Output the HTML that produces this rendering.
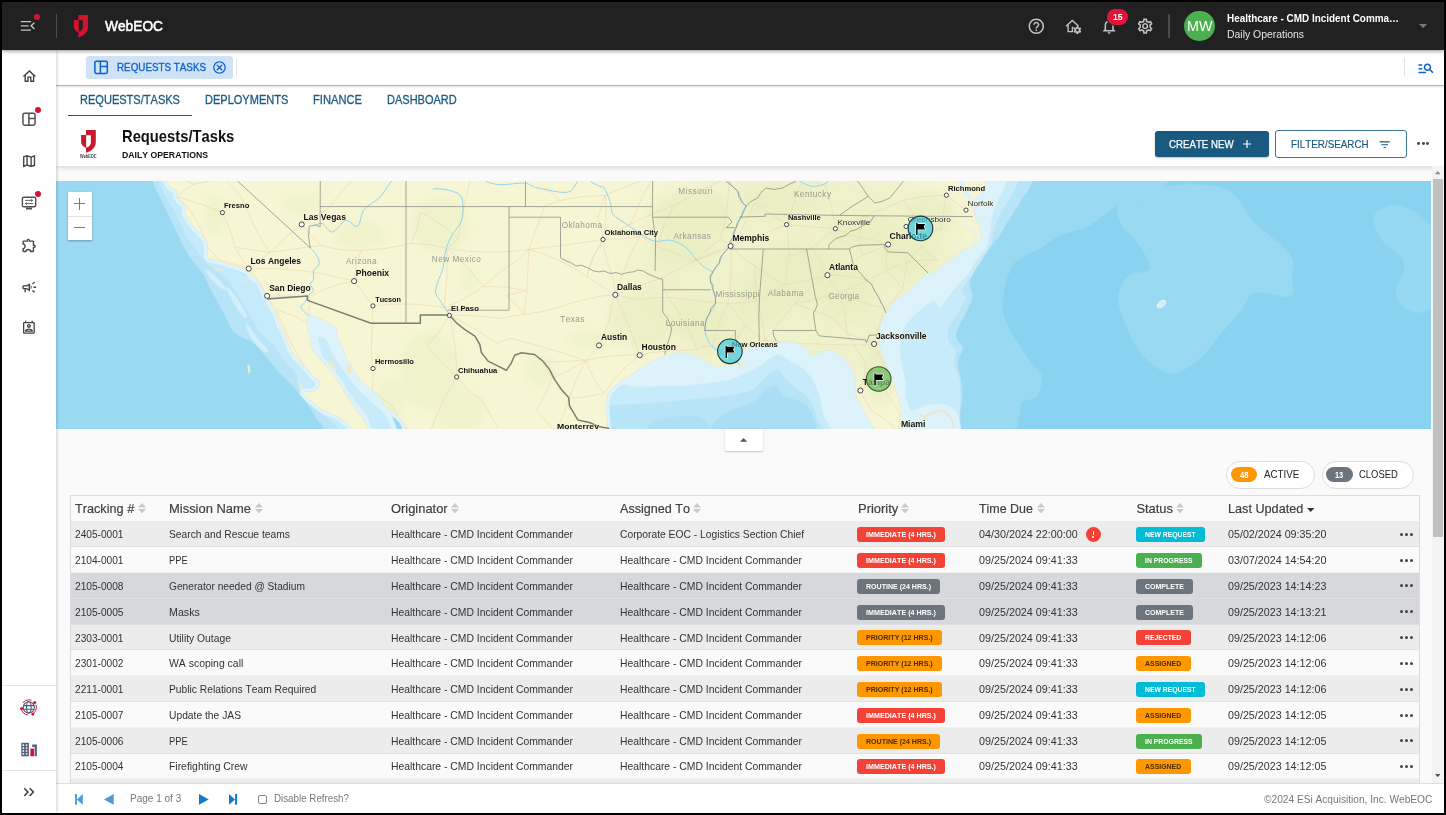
<!DOCTYPE html>
<html lang="en"><head><meta charset="utf-8"><title>WebEOC - Requests/Tasks</title>
<style>
*{box-sizing:border-box}
html,body{margin:0;padding:0;background:#000;}
body{width:1446px;height:815px;overflow:hidden;position:relative;font-family:"Liberation Sans", sans-serif;font-kerning:none;-webkit-font-smoothing:antialiased}
#app{position:absolute;left:0;top:0;width:1446px;height:815px;background:#000;overflow:hidden;will-change:transform}
#app div,#app span.t,#app svg.i,#app header,#app aside,#app nav,#app main,#app footer,#app section{position:absolute}
span.t{white-space:nowrap;display:block;transform-origin:0 0}
.dot{border-radius:50%;background:#d8102f}
.bdg{border-radius:3px;height:15.2px}
</style></head>
<body><div id="app">
<div style="left:56.00px;top:49.50px;width:1388.00px;height:763.50px;background:#fafafa"></div>
<div style="left:56px;top:180.6px;width:1375.2px;height:248.4px;background:#8ad3f0;overflow:hidden"><svg class="i" style="left:0;top:0" width="1375.2" height="248.4" viewBox="56 180.6 1375.2 248.4"><defs><filter id="bl" x="-20%" y="-20%" width="140%" height="140%"><feGaussianBlur stdDeviation="5"/></filter><filter id="bl2" x="-30%" y="-30%" width="160%" height="160%"><feGaussianBlur stdDeviation="22"/></filter><filter id="b1" x="-5%" y="-5%" width="110%" height="110%"><feGaussianBlur stdDeviation=".7"/></filter><clipPath id="lc"><path d="M986.0 140.0C1109.0 143.0 986.0 154.6 986.0 160.0C986.0 165.4 986.0 172.8 986.0 176.0C986.0 179.2 986.5 178.8 986.0 181.0C985.5 183.2 984.1 188.8 982.7 191.0C981.4 193.2 978.5 194.3 977.0 196.0C975.5 197.7 973.2 199.9 972.8 202.6C972.4 205.3 973.4 210.7 974.4 214.2C975.4 217.7 978.4 222.6 979.4 225.8C980.4 229.0 981.3 233.3 981.1 235.8C980.9 238.3 979.5 240.7 977.8 242.4C976.1 244.1 972.0 246.2 969.5 247.4C967.0 248.6 963.5 249.5 961.2 250.7C959.0 251.9 956.8 254.0 954.5 255.7C952.2 257.4 948.4 260.6 946.2 262.3C944.0 264.0 941.6 265.9 939.6 267.3C937.6 268.7 935.0 270.5 933.0 271.5C931.0 272.5 928.3 272.9 926.3 274.0C924.3 275.1 921.7 277.2 919.7 278.9C917.7 280.6 915.0 283.6 913.0 285.6C911.0 287.6 908.6 290.5 906.4 292.2C904.2 293.9 900.3 295.5 898.1 297.2C895.9 298.9 893.2 301.6 891.5 303.8C889.8 306.0 888.1 309.1 886.5 312.1C884.9 315.1 881.6 320.7 880.5 324.0C879.4 327.3 879.1 331.0 879.0 334.0C878.9 337.0 879.1 341.1 879.5 344.0C879.9 346.9 880.7 350.1 881.5 353.0C882.3 355.9 883.6 359.9 885.0 363.0C886.4 366.1 889.6 370.6 891.0 374.0C892.4 377.4 893.4 382.0 894.5 385.6C895.6 389.2 897.5 394.3 898.5 398.0C899.5 401.7 900.8 406.9 901.4 410.5C902.0 414.1 902.4 419.2 902.2 422.0C902.0 424.8 900.5 427.2 900.0 429.0C899.5 430.8 899.1 430.9 899.0 434.0C898.9 437.1 899.0 444.6 899.0 450.0C899.0 455.4 902.5 467.0 899.0 470.0C895.5 473.0 879.5 473.0 876.0 470.0C872.5 467.0 876.0 455.4 876.0 450.0C876.0 444.6 876.1 437.1 876.0 434.0C875.9 430.9 875.7 430.5 875.0 429.0C874.3 427.5 872.8 425.8 871.5 423.8C870.2 421.8 868.1 418.2 866.6 415.5C865.1 412.8 863.0 408.0 861.6 405.5C860.2 403.0 858.5 401.1 857.5 398.9C856.5 396.7 855.5 393.1 855.2 390.6C854.9 388.1 856.0 385.0 855.8 382.3C855.6 379.6 855.1 375.0 854.1 372.3C853.1 369.6 850.7 366.2 849.0 364.0C847.3 361.8 844.8 359.4 842.6 357.4C840.4 355.4 836.8 351.9 834.3 350.8C831.8 349.7 828.2 349.7 826.0 349.9C823.8 350.1 821.5 351.6 819.3 352.4C817.0 353.1 812.7 355.4 811.0 354.9C809.3 354.4 809.2 350.7 807.7 349.1C806.2 347.5 803.3 345.2 801.1 344.1C798.9 343.0 795.5 342.0 792.8 341.6C790.1 341.2 785.8 341.5 782.8 341.6C779.8 341.7 776.4 342.1 772.9 342.5C769.4 342.9 763.1 343.6 759.6 344.1C756.1 344.6 752.1 344.6 749.6 345.8C747.1 347.0 744.5 350.4 743.0 352.4C741.5 354.4 739.7 357.6 739.7 359.1C739.7 360.6 742.0 361.2 743.0 362.4C744.0 363.6 746.8 367.2 746.3 367.4C745.8 367.6 742.2 364.4 739.7 364.0C737.2 363.6 733.2 364.6 729.7 364.9C726.2 365.2 719.6 366.1 716.4 365.7C713.2 365.3 710.6 363.5 708.1 362.4C705.6 361.3 702.0 359.4 699.8 358.2C697.6 357.0 696.2 355.1 693.2 354.1C690.2 353.1 684.4 351.3 680.0 351.6C675.6 351.9 668.0 354.6 664.1 355.8C660.2 357.0 657.1 358.4 654.1 359.9C651.1 361.4 647.1 363.8 644.1 365.7C641.1 367.6 637.2 370.4 634.2 372.3C631.2 374.2 627.2 376.2 624.2 378.2C621.2 380.2 616.8 383.2 614.3 385.6C611.8 388.0 608.8 391.4 607.6 393.9C606.4 396.4 606.2 399.5 606.0 402.2C605.8 404.9 605.8 409.2 606.0 412.2C606.2 415.2 607.0 419.5 607.2 422.0C607.4 424.5 607.5 427.2 607.6 429.0C607.7 430.8 607.9 430.9 608.0 434.0C608.1 437.1 608.0 444.6 608.0 450.0C608.0 455.4 638.2 467.0 608.0 470.0C577.8 473.0 436.7 473.0 406.5 470.0C376.3 467.0 406.5 455.4 406.5 450.0C406.5 444.6 406.6 437.1 406.5 434.0C406.4 430.9 406.2 430.5 405.9 429.0C405.6 427.5 405.3 425.6 404.3 423.8C403.3 422.0 401.3 419.2 399.3 417.2C397.3 415.2 393.5 412.8 391.0 410.5C388.5 408.2 384.7 404.7 382.7 402.2C380.7 399.7 379.4 395.9 377.7 393.9C376.0 391.9 373.3 390.6 371.1 388.9C368.9 387.2 365.1 384.5 362.8 382.3C360.6 380.1 357.8 376.5 356.1 374.0C354.4 371.5 352.7 368.2 351.2 365.7C349.7 363.2 347.4 360.1 346.2 357.4C345.0 354.7 344.1 350.5 342.9 347.5C341.7 344.5 338.9 340.5 337.9 337.5C336.9 334.5 337.4 329.5 336.2 327.5C335.0 325.5 331.6 325.4 329.6 324.2C327.6 323.0 325.6 320.6 322.9 319.2C320.2 317.8 313.5 315.6 311.3 315.1C309.1 314.6 308.7 314.3 308.0 315.9C307.3 317.5 306.4 322.9 306.7 325.9C307.0 328.9 309.0 332.6 309.7 335.8C310.4 339.0 310.1 344.5 311.3 347.5C312.5 350.5 315.8 353.1 318.0 355.8C320.2 358.5 324.1 363.0 326.3 365.7C328.5 368.4 330.9 371.5 332.9 374.0C334.9 376.5 337.9 379.8 339.5 382.3C341.1 384.8 342.2 388.1 343.7 390.6C345.2 393.1 347.9 396.4 349.5 398.9C351.1 401.4 352.8 404.7 354.5 407.2C356.2 409.7 359.4 413.0 361.1 415.5C362.8 418.0 365.0 421.8 366.1 423.8C367.2 425.8 368.2 427.5 368.6 429.0C369.0 430.5 368.9 430.9 369.0 434.0C369.1 437.1 369.0 444.6 369.0 450.0C369.0 455.4 371.3 467.0 369.0 470.0C366.7 473.0 355.8 473.0 353.5 470.0C351.2 467.0 353.5 455.4 353.5 450.0C353.5 444.6 353.6 437.1 353.5 434.0C353.4 430.9 353.9 430.8 352.8 429.0C351.7 427.2 348.7 424.1 346.2 422.1C343.7 420.1 339.4 417.2 336.2 415.5C333.0 413.8 328.1 412.5 324.6 410.5C321.1 408.5 316.2 404.9 313.0 402.2C309.8 399.5 302.8 394.0 303.0 392.3C303.2 390.6 312.1 392.1 314.6 390.6C317.1 389.1 319.8 384.5 319.6 382.3C319.4 380.1 315.2 378.2 313.0 375.7C310.8 373.2 307.2 368.4 304.7 365.7C302.2 363.0 298.5 359.9 296.4 357.4C294.3 354.9 292.1 352.1 290.6 349.1C289.1 346.1 288.0 341.2 286.4 337.5C284.8 333.8 281.4 327.9 279.8 324.2C278.2 320.5 277.1 315.8 275.6 312.6C274.1 309.4 271.0 305.0 269.8 302.6C268.6 300.2 267.9 297.9 267.3 296.8C266.7 295.7 266.8 297.0 266.0 295.5C265.2 294.0 263.2 289.2 262.0 287.0C260.8 284.8 259.6 282.2 258.0 280.5C256.4 278.8 252.5 276.9 251.0 275.5C249.5 274.1 249.6 272.7 248.0 271.5C246.4 270.3 243.2 268.6 240.5 267.5C237.8 266.4 233.6 265.1 230.0 264.0C226.4 262.9 219.8 261.0 216.5 260.0C213.2 259.0 209.3 258.9 208.0 257.5C206.7 256.1 207.7 253.0 207.5 250.5C207.3 248.0 207.6 243.7 206.5 241.0C205.4 238.3 202.2 235.1 200.0 232.5C197.8 229.9 194.2 226.8 192.0 224.0C189.8 221.2 186.5 216.7 185.5 214.0C184.5 211.3 186.7 208.5 185.5 206.0C184.3 203.5 178.8 199.8 177.5 197.5C176.2 195.2 177.8 192.9 176.5 191.0C175.2 189.1 169.9 186.0 168.5 184.5C167.1 183.0 167.4 182.3 167.0 181.0C166.6 179.7 166.2 179.2 166.0 176.0C165.8 172.8 166.0 165.4 166.0 160.0C166.0 154.6 43.0 143.0 166.0 140.0C289.0 137.0 863.0 137.0 986.0 140.0Z"/></clipPath></defs><rect x="56" y="180.6" width="1375.2" height="248.4" fill="#8ad3f0"/><g filter="url(#b1)"><path d="M50.0 170.0L420.0 170.0L420.0 440.0L50.0 440.0Z" fill="#9ad9f2"/><path d="M153.0 150.0C150.7 154.1 152.1 174.7 153.0 181.0C153.9 187.3 158.0 192.6 160.0 197.0C162.0 201.4 165.6 208.9 168.0 214.0C170.4 219.1 175.7 230.2 178.0 235.0C180.3 239.8 183.3 246.2 185.5 250.0C187.7 253.8 192.0 260.0 194.4 263.3C196.8 266.6 200.9 270.5 203.3 274.4C205.7 278.3 209.5 287.2 212.2 292.2C214.9 297.2 220.3 306.9 223.3 312.2C226.3 317.5 230.3 328.1 234.4 332.2C238.5 336.3 249.9 339.8 254.3 343.3C258.7 346.8 264.1 354.7 267.7 358.8C271.3 362.9 277.5 370.4 281.0 374.3C284.5 378.2 291.0 384.1 294.3 387.7C297.6 391.3 302.4 396.9 305.4 401.0C308.4 405.1 314.1 415.0 316.5 418.7C318.9 422.4 322.2 422.9 323.2 428.7C324.2 434.5 319.1 457.6 324.0 462.0C328.9 466.4 357.9 470.3 360.0 462.0C362.1 453.7 348.0 416.3 340.0 400.0C332.0 383.7 309.3 354.7 300.0 340.0C290.7 325.3 281.3 301.3 270.0 290.0C258.7 278.7 225.7 267.0 215.0 255.0C204.3 243.0 196.0 214.0 190.0 200.0C184.0 186.0 174.9 156.7 170.0 150.0C165.1 143.3 155.3 145.9 153.0 150.0Z" fill="#b7e4f7"/><path d="M159.0 150.0C157.3 154.1 158.1 174.7 159.0 181.0C159.9 187.3 163.7 192.6 166.0 197.0C168.3 201.4 173.3 208.9 176.0 214.0C178.7 219.1 183.3 230.2 186.0 235.0C188.7 239.8 193.2 246.3 196.0 250.0C198.8 253.7 203.5 259.7 207.0 263.0C210.5 266.3 218.1 271.1 222.0 275.0C225.9 278.9 232.5 287.1 236.0 292.0C239.5 296.9 244.8 306.7 248.0 312.0C251.2 317.3 256.8 327.9 260.0 332.0C263.2 336.1 268.9 339.4 272.0 343.0C275.1 346.6 279.8 354.9 283.0 359.0C286.2 363.1 293.9 370.1 296.0 374.0C298.1 377.9 297.4 384.4 299.0 388.0C300.6 391.6 304.1 396.9 308.0 401.0C311.9 405.1 324.0 415.3 328.0 419.0C332.0 422.7 336.5 423.3 338.0 429.0C339.5 434.7 335.8 457.6 339.0 462.0C342.2 466.4 361.9 470.3 362.0 462.0C362.1 453.7 348.3 416.3 340.0 400.0C331.7 383.7 309.3 354.7 300.0 340.0C290.7 325.3 281.3 301.3 270.0 290.0C258.7 278.7 225.7 267.0 215.0 255.0C204.3 243.0 195.7 214.0 190.0 200.0C184.3 186.0 176.1 156.7 172.0 150.0C167.9 143.3 160.7 145.9 159.0 150.0Z" fill="#c8ebf9" opacity=".8"/><path d="M226.0 286.0C226.7 285.3 232.5 291.2 236.0 296.0C239.5 300.8 245.8 311.7 247.0 315.0C248.2 318.3 245.5 318.5 243.0 316.0C240.5 313.5 234.8 305.0 232.0 300.0C229.2 295.0 225.3 286.7 226.0 286.0Z" fill="#ddf3fc" opacity=".7"/><path d="M246.0 322.0C247.3 322.3 254.3 333.3 258.0 338.0C261.7 342.7 267.2 347.8 268.0 350.0C268.8 352.2 266.0 353.3 263.0 351.0C260.0 348.7 252.8 340.8 250.0 336.0C247.2 331.2 244.7 321.7 246.0 322.0Z" fill="#ddf3fc" opacity=".7"/><path d="M205.0 268.0C206.0 267.7 212.5 272.7 216.0 276.0C219.5 279.3 225.2 286.0 226.0 288.0C226.8 290.0 223.7 289.7 221.0 288.0C218.3 286.3 212.7 281.3 210.0 278.0C207.3 274.7 204.0 268.3 205.0 268.0Z" fill="#ddf3fc" opacity=".7"/><path d="M308.0 314.0L340.0 320.0L350.0 360.0L385.0 398.0L410.0 462.0L366.0 462.0L340.0 385.0L312.0 350.0L305.0 326.0Z" fill="#ddf3fc"/><path d="M318.0 338.0C318.3 335.0 323.3 337.0 326.0 340.0C328.7 343.0 330.8 350.7 334.0 356.0C337.2 361.3 341.2 366.7 345.0 372.0C348.8 377.3 352.5 383.0 357.0 388.0C361.5 393.0 366.8 396.7 372.0 402.0C377.2 407.3 384.0 410.0 388.0 420.0C392.0 430.0 397.7 455.0 396.0 462.0C394.3 469.0 382.7 469.3 378.0 462.0C373.3 454.7 372.3 428.7 368.0 418.0C363.7 407.3 357.0 404.7 352.0 398.0C347.0 391.3 342.7 384.7 338.0 378.0C333.3 371.3 327.3 364.7 324.0 358.0C320.7 351.3 317.7 341.0 318.0 338.0Z" fill="#c8ebf9"/><path d="M600.0 340.0L900.0 340.0L900.0 462.0L600.0 462.0Z" fill="#ddf3fc"/><path d="M600.0 388.0C605.3 378.0 632.0 387.3 640.0 387.0C648.0 386.7 654.0 385.8 660.0 385.6C666.0 385.4 678.3 386.0 684.9 385.6C691.5 385.2 703.6 383.2 709.8 382.3C716.0 381.4 726.5 380.3 731.4 379.0C736.3 377.7 742.5 374.1 746.3 372.3C750.1 370.5 756.4 367.6 759.6 365.7C762.8 363.8 767.3 359.5 770.0 358.0C772.7 356.5 776.5 353.5 779.5 354.1C782.5 354.7 789.5 360.4 792.8 362.4C796.1 364.4 801.5 366.3 804.4 369.0C807.3 371.7 812.4 378.8 814.4 382.3C816.4 385.8 818.2 391.6 819.3 395.6C820.4 399.6 821.8 403.3 822.7 412.2C823.6 421.1 855.7 455.4 826.0 462.0C796.3 468.6 630.1 471.9 600.0 462.0C569.9 452.1 594.7 398.0 600.0 388.0Z" fill="#c8ebf9"/><path d="M606.0 410.0C609.2 402.3 622.8 405.0 630.0 404.0C637.2 403.0 651.6 402.9 660.0 402.2C668.4 401.5 684.3 399.8 693.2 398.9C702.1 398.0 718.4 396.9 726.4 395.6C734.4 394.3 747.6 391.7 752.9 389.0C758.2 386.3 762.9 378.4 766.2 375.7C769.5 373.0 775.1 368.6 777.8 369.0C780.5 369.4 783.4 376.3 786.1 379.0C788.8 381.7 794.7 386.3 797.8 389.0C800.9 391.7 807.0 395.4 809.4 398.9C811.8 402.4 814.7 407.1 816.0 415.5C817.3 423.9 847.3 455.8 819.3 462.0C791.3 468.2 634.4 468.9 606.0 462.0C577.6 455.1 602.8 417.7 606.0 410.0Z" fill="#b7e4f7"/><path d="M700.0 462.0C685.8 457.6 706.3 435.4 709.8 428.8C713.3 422.2 720.7 415.7 726.4 412.2C732.1 408.7 747.6 405.3 752.9 402.2C758.2 399.1 763.1 391.2 766.2 389.0C769.3 386.8 774.0 384.7 776.2 385.6C778.4 386.5 779.3 393.4 782.8 395.6C786.3 397.8 798.7 399.5 802.7 402.2C806.7 404.9 810.9 407.5 812.7 415.5C814.5 423.5 831.0 455.8 816.0 462.0C801.0 468.2 714.2 466.4 700.0 462.0Z" fill="#a9def4"/><path d="M640.0 462.0C631.2 456.9 644.7 430.1 650.0 424.0C655.3 417.9 672.7 416.5 680.0 416.0C687.3 415.5 700.2 413.9 705.0 420.0C709.8 426.1 724.7 456.4 716.0 462.0C707.3 467.6 648.8 467.1 640.0 462.0Z" fill="#a9def4" opacity=".7"/><path d="M960.0 150.0C995.2 130.0 1136.8 145.0 1164.0 150.0C1191.2 155.0 1166.8 180.6 1164.0 187.5C1161.2 194.4 1149.1 199.2 1143.0 201.5C1136.9 203.8 1125.1 201.9 1118.0 205.0C1110.9 208.1 1097.7 221.0 1090.0 225.0C1082.3 229.0 1066.7 231.9 1060.0 235.0C1053.3 238.1 1046.0 244.4 1040.0 248.0C1034.0 251.6 1019.7 257.1 1015.0 262.0C1010.3 266.9 1006.6 278.6 1005.0 285.0C1003.4 291.4 1002.3 304.0 1003.0 310.0C1003.7 316.0 1007.9 325.5 1010.0 330.0C1012.1 334.5 1016.2 339.7 1019.0 344.0C1021.8 348.3 1027.9 357.7 1031.0 362.0C1034.1 366.3 1041.2 371.5 1042.0 376.0C1042.8 380.5 1039.7 392.5 1037.0 396.0C1034.3 399.5 1024.4 399.3 1022.0 402.0C1019.6 404.7 1021.5 408.0 1019.0 416.0C1016.5 424.0 1018.9 455.9 1003.0 462.0C987.1 468.1 913.7 483.6 900.0 462.0C886.3 440.4 892.0 341.6 900.0 300.0C908.0 258.4 924.8 170.0 960.0 150.0Z" fill="#9ad9f2"/><path d="M1118.4 205.0C1121.9 200.9 1135.4 204.4 1143.0 201.5C1150.6 198.6 1155.3 190.4 1164.0 187.5C1172.7 184.6 1183.9 183.4 1195.0 184.0C1206.1 184.6 1220.4 184.6 1230.4 191.0C1240.4 197.4 1245.1 212.0 1255.0 222.5C1264.9 233.0 1283.8 244.8 1290.0 254.0C1296.2 263.2 1292.0 271.0 1292.0 278.0C1292.0 285.0 1296.2 293.6 1290.0 296.0C1283.8 298.4 1263.2 290.2 1255.0 292.5C1246.8 294.8 1246.8 303.0 1241.0 310.0C1235.2 317.0 1227.0 326.3 1220.0 334.5C1213.0 342.7 1207.2 352.6 1199.0 359.0C1190.8 365.4 1180.3 373.6 1171.0 373.0C1161.7 372.4 1150.6 363.7 1143.0 355.5C1135.4 347.3 1129.6 333.9 1125.5 324.0C1121.4 314.1 1117.8 304.2 1118.4 296.0C1119.0 287.8 1123.7 279.7 1129.0 275.0C1134.3 270.3 1148.8 273.8 1150.0 268.0C1151.2 262.2 1140.7 247.0 1136.0 240.0C1131.3 233.0 1124.9 231.8 1122.0 226.0C1119.1 220.2 1114.9 209.1 1118.4 205.0Z" fill="#9ad9f2"/><path d="M1374.0 215.0C1376.2 209.2 1387.3 205.0 1395.0 205.0C1402.7 205.0 1413.2 209.2 1420.0 215.0C1426.8 220.8 1433.3 225.8 1436.0 240.0C1438.7 254.2 1439.5 288.0 1436.0 300.0C1432.5 312.0 1421.7 312.7 1415.0 312.0C1408.3 311.3 1397.8 304.3 1396.0 296.0C1394.2 287.7 1406.3 271.3 1404.0 262.0C1401.7 252.7 1387.0 247.8 1382.0 240.0C1377.0 232.2 1371.8 220.8 1374.0 215.0Z" fill="#9ad9f2" opacity=".8"/><path d="M950.0 150.0C970.3 130.0 1021.5 145.9 1032.5 150.0C1043.5 154.1 1033.8 174.7 1032.5 181.0C1031.2 187.3 1025.1 193.5 1022.6 197.6C1020.1 201.7 1016.2 208.5 1014.0 212.0C1011.8 215.5 1008.0 221.0 1006.0 224.2C1004.0 227.4 1002.0 232.0 999.3 235.8C996.6 239.6 989.2 248.2 986.1 252.4C983.0 256.6 978.3 263.1 976.1 267.3C973.9 271.5 969.9 280.1 969.5 283.9C969.1 287.7 973.3 292.2 972.8 296.0C972.3 299.8 968.1 308.3 966.1 312.6C964.1 316.9 959.3 324.7 958.0 328.0C956.7 331.3 955.6 334.9 956.2 337.5C956.8 340.1 962.6 344.2 962.8 347.5C963.0 350.8 958.2 357.8 958.0 362.0C957.8 366.2 960.5 374.1 961.0 379.0C961.5 383.9 962.1 394.5 962.0 398.9C961.9 403.3 961.6 403.8 960.5 412.2C959.4 420.6 964.7 455.4 954.0 462.0C943.3 468.6 889.9 483.6 880.0 462.0C870.1 440.4 870.7 341.6 880.0 300.0C889.3 258.4 929.7 170.0 950.0 150.0Z" fill="#b7e4f7"/><path d="M950.0 150.0C968.5 130.0 1009.9 145.9 1019.0 150.0C1028.1 154.1 1019.2 174.7 1018.0 181.0C1016.8 187.3 1012.4 193.2 1010.0 197.6C1007.6 202.0 1002.1 209.7 1000.0 214.0C997.9 218.3 995.2 226.0 994.0 230.0C992.8 234.0 992.6 240.1 991.0 244.0C989.4 247.9 984.5 254.9 982.0 259.0C979.5 263.1 974.7 270.9 972.0 275.0C969.3 279.1 962.8 286.9 962.0 290.0C961.2 293.1 966.5 295.0 966.0 298.0C965.5 301.0 960.4 308.4 958.0 312.6C955.6 316.8 949.0 325.2 947.9 329.2C946.8 333.2 948.4 339.6 949.5 342.5C950.6 345.4 955.5 348.1 956.2 350.8C956.9 353.5 954.1 358.6 954.5 362.4C954.9 366.2 958.7 374.1 959.5 379.0C960.3 383.9 960.3 394.5 960.3 398.9C960.3 403.3 960.5 403.8 959.5 412.2C958.5 420.6 963.5 455.4 952.9 462.0C942.3 468.6 889.7 483.6 880.0 462.0C870.3 440.4 870.7 341.6 880.0 300.0C889.3 258.4 931.5 170.0 950.0 150.0Z" fill="#c8ebf9"/><path d="M950.0 150.0C965.9 132.5 999.5 146.4 1006.0 150.0C1012.5 153.6 1006.8 175.4 1006.0 181.0C1005.2 186.6 1000.9 193.7 999.3 197.6C997.7 201.5 993.9 209.7 992.7 214.2C991.5 218.7 990.2 231.9 989.4 235.8C988.6 239.7 987.4 244.7 986.0 247.4C984.6 250.1 979.1 255.9 977.0 259.0C974.9 262.1 970.8 270.3 968.0 274.0C965.2 277.7 956.3 286.7 953.0 290.6C949.7 294.5 942.2 306.0 940.0 307.1C937.8 308.2 936.5 299.5 934.0 300.0C931.5 300.5 922.4 308.0 919.0 311.0C915.6 314.0 906.9 321.8 904.7 325.9C902.5 330.0 900.1 341.2 899.8 345.8C899.5 350.4 901.5 361.4 902.2 365.7C902.9 370.0 905.1 378.4 905.6 382.3C906.1 386.2 905.7 395.7 906.4 398.9C907.1 402.1 909.8 409.3 912.0 410.0C914.2 410.7 921.1 405.7 925.0 405.0C928.9 404.3 941.1 402.8 945.0 404.0C948.9 405.2 956.2 408.2 958.0 415.0C959.8 421.8 969.1 456.5 960.0 462.0C950.9 467.5 890.5 480.9 880.0 462.0C869.5 443.1 861.8 336.4 870.0 300.0C878.2 263.6 934.1 167.5 950.0 150.0Z" fill="#ddf3fc"/></g><path d="M986.0 140.0C1109.0 143.0 986.0 154.6 986.0 160.0C986.0 165.4 986.0 172.8 986.0 176.0C986.0 179.2 986.5 178.8 986.0 181.0C985.5 183.2 984.1 188.8 982.7 191.0C981.4 193.2 978.5 194.3 977.0 196.0C975.5 197.7 973.2 199.9 972.8 202.6C972.4 205.3 973.4 210.7 974.4 214.2C975.4 217.7 978.4 222.6 979.4 225.8C980.4 229.0 981.3 233.3 981.1 235.8C980.9 238.3 979.5 240.7 977.8 242.4C976.1 244.1 972.0 246.2 969.5 247.4C967.0 248.6 963.5 249.5 961.2 250.7C959.0 251.9 956.8 254.0 954.5 255.7C952.2 257.4 948.4 260.6 946.2 262.3C944.0 264.0 941.6 265.9 939.6 267.3C937.6 268.7 935.0 270.5 933.0 271.5C931.0 272.5 928.3 272.9 926.3 274.0C924.3 275.1 921.7 277.2 919.7 278.9C917.7 280.6 915.0 283.6 913.0 285.6C911.0 287.6 908.6 290.5 906.4 292.2C904.2 293.9 900.3 295.5 898.1 297.2C895.9 298.9 893.2 301.6 891.5 303.8C889.8 306.0 888.1 309.1 886.5 312.1C884.9 315.1 881.6 320.7 880.5 324.0C879.4 327.3 879.1 331.0 879.0 334.0C878.9 337.0 879.1 341.1 879.5 344.0C879.9 346.9 880.7 350.1 881.5 353.0C882.3 355.9 883.6 359.9 885.0 363.0C886.4 366.1 889.6 370.6 891.0 374.0C892.4 377.4 893.4 382.0 894.5 385.6C895.6 389.2 897.5 394.3 898.5 398.0C899.5 401.7 900.8 406.9 901.4 410.5C902.0 414.1 902.4 419.2 902.2 422.0C902.0 424.8 900.5 427.2 900.0 429.0C899.5 430.8 899.1 430.9 899.0 434.0C898.9 437.1 899.0 444.6 899.0 450.0C899.0 455.4 902.5 467.0 899.0 470.0C895.5 473.0 879.5 473.0 876.0 470.0C872.5 467.0 876.0 455.4 876.0 450.0C876.0 444.6 876.1 437.1 876.0 434.0C875.9 430.9 875.7 430.5 875.0 429.0C874.3 427.5 872.8 425.8 871.5 423.8C870.2 421.8 868.1 418.2 866.6 415.5C865.1 412.8 863.0 408.0 861.6 405.5C860.2 403.0 858.5 401.1 857.5 398.9C856.5 396.7 855.5 393.1 855.2 390.6C854.9 388.1 856.0 385.0 855.8 382.3C855.6 379.6 855.1 375.0 854.1 372.3C853.1 369.6 850.7 366.2 849.0 364.0C847.3 361.8 844.8 359.4 842.6 357.4C840.4 355.4 836.8 351.9 834.3 350.8C831.8 349.7 828.2 349.7 826.0 349.9C823.8 350.1 821.5 351.6 819.3 352.4C817.0 353.1 812.7 355.4 811.0 354.9C809.3 354.4 809.2 350.7 807.7 349.1C806.2 347.5 803.3 345.2 801.1 344.1C798.9 343.0 795.5 342.0 792.8 341.6C790.1 341.2 785.8 341.5 782.8 341.6C779.8 341.7 776.4 342.1 772.9 342.5C769.4 342.9 763.1 343.6 759.6 344.1C756.1 344.6 752.1 344.6 749.6 345.8C747.1 347.0 744.5 350.4 743.0 352.4C741.5 354.4 739.7 357.6 739.7 359.1C739.7 360.6 742.0 361.2 743.0 362.4C744.0 363.6 746.8 367.2 746.3 367.4C745.8 367.6 742.2 364.4 739.7 364.0C737.2 363.6 733.2 364.6 729.7 364.9C726.2 365.2 719.6 366.1 716.4 365.7C713.2 365.3 710.6 363.5 708.1 362.4C705.6 361.3 702.0 359.4 699.8 358.2C697.6 357.0 696.2 355.1 693.2 354.1C690.2 353.1 684.4 351.3 680.0 351.6C675.6 351.9 668.0 354.6 664.1 355.8C660.2 357.0 657.1 358.4 654.1 359.9C651.1 361.4 647.1 363.8 644.1 365.7C641.1 367.6 637.2 370.4 634.2 372.3C631.2 374.2 627.2 376.2 624.2 378.2C621.2 380.2 616.8 383.2 614.3 385.6C611.8 388.0 608.8 391.4 607.6 393.9C606.4 396.4 606.2 399.5 606.0 402.2C605.8 404.9 605.8 409.2 606.0 412.2C606.2 415.2 607.0 419.5 607.2 422.0C607.4 424.5 607.5 427.2 607.6 429.0C607.7 430.8 607.9 430.9 608.0 434.0C608.1 437.1 608.0 444.6 608.0 450.0C608.0 455.4 638.2 467.0 608.0 470.0C577.8 473.0 436.7 473.0 406.5 470.0C376.3 467.0 406.5 455.4 406.5 450.0C406.5 444.6 406.6 437.1 406.5 434.0C406.4 430.9 406.2 430.5 405.9 429.0C405.6 427.5 405.3 425.6 404.3 423.8C403.3 422.0 401.3 419.2 399.3 417.2C397.3 415.2 393.5 412.8 391.0 410.5C388.5 408.2 384.7 404.7 382.7 402.2C380.7 399.7 379.4 395.9 377.7 393.9C376.0 391.9 373.3 390.6 371.1 388.9C368.9 387.2 365.1 384.5 362.8 382.3C360.6 380.1 357.8 376.5 356.1 374.0C354.4 371.5 352.7 368.2 351.2 365.7C349.7 363.2 347.4 360.1 346.2 357.4C345.0 354.7 344.1 350.5 342.9 347.5C341.7 344.5 338.9 340.5 337.9 337.5C336.9 334.5 337.4 329.5 336.2 327.5C335.0 325.5 331.6 325.4 329.6 324.2C327.6 323.0 325.6 320.6 322.9 319.2C320.2 317.8 313.5 315.6 311.3 315.1C309.1 314.6 308.7 314.3 308.0 315.9C307.3 317.5 306.4 322.9 306.7 325.9C307.0 328.9 309.0 332.6 309.7 335.8C310.4 339.0 310.1 344.5 311.3 347.5C312.5 350.5 315.8 353.1 318.0 355.8C320.2 358.5 324.1 363.0 326.3 365.7C328.5 368.4 330.9 371.5 332.9 374.0C334.9 376.5 337.9 379.8 339.5 382.3C341.1 384.8 342.2 388.1 343.7 390.6C345.2 393.1 347.9 396.4 349.5 398.9C351.1 401.4 352.8 404.7 354.5 407.2C356.2 409.7 359.4 413.0 361.1 415.5C362.8 418.0 365.0 421.8 366.1 423.8C367.2 425.8 368.2 427.5 368.6 429.0C369.0 430.5 368.9 430.9 369.0 434.0C369.1 437.1 369.0 444.6 369.0 450.0C369.0 455.4 371.3 467.0 369.0 470.0C366.7 473.0 355.8 473.0 353.5 470.0C351.2 467.0 353.5 455.4 353.5 450.0C353.5 444.6 353.6 437.1 353.5 434.0C353.4 430.9 353.9 430.8 352.8 429.0C351.7 427.2 348.7 424.1 346.2 422.1C343.7 420.1 339.4 417.2 336.2 415.5C333.0 413.8 328.1 412.5 324.6 410.5C321.1 408.5 316.2 404.9 313.0 402.2C309.8 399.5 302.8 394.0 303.0 392.3C303.2 390.6 312.1 392.1 314.6 390.6C317.1 389.1 319.8 384.5 319.6 382.3C319.4 380.1 315.2 378.2 313.0 375.7C310.8 373.2 307.2 368.4 304.7 365.7C302.2 363.0 298.5 359.9 296.4 357.4C294.3 354.9 292.1 352.1 290.6 349.1C289.1 346.1 288.0 341.2 286.4 337.5C284.8 333.8 281.4 327.9 279.8 324.2C278.2 320.5 277.1 315.8 275.6 312.6C274.1 309.4 271.0 305.0 269.8 302.6C268.6 300.2 267.9 297.9 267.3 296.8C266.7 295.7 266.8 297.0 266.0 295.5C265.2 294.0 263.2 289.2 262.0 287.0C260.8 284.8 259.6 282.2 258.0 280.5C256.4 278.8 252.5 276.9 251.0 275.5C249.5 274.1 249.6 272.7 248.0 271.5C246.4 270.3 243.2 268.6 240.5 267.5C237.8 266.4 233.6 265.1 230.0 264.0C226.4 262.9 219.8 261.0 216.5 260.0C213.2 259.0 209.3 258.9 208.0 257.5C206.7 256.1 207.7 253.0 207.5 250.5C207.3 248.0 207.6 243.7 206.5 241.0C205.4 238.3 202.2 235.1 200.0 232.5C197.8 229.9 194.2 226.8 192.0 224.0C189.8 221.2 186.5 216.7 185.5 214.0C184.5 211.3 186.7 208.5 185.5 206.0C184.3 203.5 178.8 199.8 177.5 197.5C176.2 195.2 177.8 192.9 176.5 191.0C175.2 189.1 169.9 186.0 168.5 184.5C167.1 183.0 167.4 182.3 167.0 181.0C166.6 179.7 166.2 179.2 166.0 176.0C165.8 172.8 166.0 165.4 166.0 160.0C166.0 154.6 43.0 143.0 166.0 140.0C289.0 137.0 863.0 137.0 986.0 140.0Z" fill="none" stroke="#ddf3fc" stroke-width="7" stroke-linejoin="round"/><path d="M986.0 140.0C1109.0 143.0 986.0 154.6 986.0 160.0C986.0 165.4 986.0 172.8 986.0 176.0C986.0 179.2 986.5 178.8 986.0 181.0C985.5 183.2 984.1 188.8 982.7 191.0C981.4 193.2 978.5 194.3 977.0 196.0C975.5 197.7 973.2 199.9 972.8 202.6C972.4 205.3 973.4 210.7 974.4 214.2C975.4 217.7 978.4 222.6 979.4 225.8C980.4 229.0 981.3 233.3 981.1 235.8C980.9 238.3 979.5 240.7 977.8 242.4C976.1 244.1 972.0 246.2 969.5 247.4C967.0 248.6 963.5 249.5 961.2 250.7C959.0 251.9 956.8 254.0 954.5 255.7C952.2 257.4 948.4 260.6 946.2 262.3C944.0 264.0 941.6 265.9 939.6 267.3C937.6 268.7 935.0 270.5 933.0 271.5C931.0 272.5 928.3 272.9 926.3 274.0C924.3 275.1 921.7 277.2 919.7 278.9C917.7 280.6 915.0 283.6 913.0 285.6C911.0 287.6 908.6 290.5 906.4 292.2C904.2 293.9 900.3 295.5 898.1 297.2C895.9 298.9 893.2 301.6 891.5 303.8C889.8 306.0 888.1 309.1 886.5 312.1C884.9 315.1 881.6 320.7 880.5 324.0C879.4 327.3 879.1 331.0 879.0 334.0C878.9 337.0 879.1 341.1 879.5 344.0C879.9 346.9 880.7 350.1 881.5 353.0C882.3 355.9 883.6 359.9 885.0 363.0C886.4 366.1 889.6 370.6 891.0 374.0C892.4 377.4 893.4 382.0 894.5 385.6C895.6 389.2 897.5 394.3 898.5 398.0C899.5 401.7 900.8 406.9 901.4 410.5C902.0 414.1 902.4 419.2 902.2 422.0C902.0 424.8 900.5 427.2 900.0 429.0C899.5 430.8 899.1 430.9 899.0 434.0C898.9 437.1 899.0 444.6 899.0 450.0C899.0 455.4 902.5 467.0 899.0 470.0C895.5 473.0 879.5 473.0 876.0 470.0C872.5 467.0 876.0 455.4 876.0 450.0C876.0 444.6 876.1 437.1 876.0 434.0C875.9 430.9 875.7 430.5 875.0 429.0C874.3 427.5 872.8 425.8 871.5 423.8C870.2 421.8 868.1 418.2 866.6 415.5C865.1 412.8 863.0 408.0 861.6 405.5C860.2 403.0 858.5 401.1 857.5 398.9C856.5 396.7 855.5 393.1 855.2 390.6C854.9 388.1 856.0 385.0 855.8 382.3C855.6 379.6 855.1 375.0 854.1 372.3C853.1 369.6 850.7 366.2 849.0 364.0C847.3 361.8 844.8 359.4 842.6 357.4C840.4 355.4 836.8 351.9 834.3 350.8C831.8 349.7 828.2 349.7 826.0 349.9C823.8 350.1 821.5 351.6 819.3 352.4C817.0 353.1 812.7 355.4 811.0 354.9C809.3 354.4 809.2 350.7 807.7 349.1C806.2 347.5 803.3 345.2 801.1 344.1C798.9 343.0 795.5 342.0 792.8 341.6C790.1 341.2 785.8 341.5 782.8 341.6C779.8 341.7 776.4 342.1 772.9 342.5C769.4 342.9 763.1 343.6 759.6 344.1C756.1 344.6 752.1 344.6 749.6 345.8C747.1 347.0 744.5 350.4 743.0 352.4C741.5 354.4 739.7 357.6 739.7 359.1C739.7 360.6 742.0 361.2 743.0 362.4C744.0 363.6 746.8 367.2 746.3 367.4C745.8 367.6 742.2 364.4 739.7 364.0C737.2 363.6 733.2 364.6 729.7 364.9C726.2 365.2 719.6 366.1 716.4 365.7C713.2 365.3 710.6 363.5 708.1 362.4C705.6 361.3 702.0 359.4 699.8 358.2C697.6 357.0 696.2 355.1 693.2 354.1C690.2 353.1 684.4 351.3 680.0 351.6C675.6 351.9 668.0 354.6 664.1 355.8C660.2 357.0 657.1 358.4 654.1 359.9C651.1 361.4 647.1 363.8 644.1 365.7C641.1 367.6 637.2 370.4 634.2 372.3C631.2 374.2 627.2 376.2 624.2 378.2C621.2 380.2 616.8 383.2 614.3 385.6C611.8 388.0 608.8 391.4 607.6 393.9C606.4 396.4 606.2 399.5 606.0 402.2C605.8 404.9 605.8 409.2 606.0 412.2C606.2 415.2 607.0 419.5 607.2 422.0C607.4 424.5 607.5 427.2 607.6 429.0C607.7 430.8 607.9 430.9 608.0 434.0C608.1 437.1 608.0 444.6 608.0 450.0C608.0 455.4 638.2 467.0 608.0 470.0C577.8 473.0 436.7 473.0 406.5 470.0C376.3 467.0 406.5 455.4 406.5 450.0C406.5 444.6 406.6 437.1 406.5 434.0C406.4 430.9 406.2 430.5 405.9 429.0C405.6 427.5 405.3 425.6 404.3 423.8C403.3 422.0 401.3 419.2 399.3 417.2C397.3 415.2 393.5 412.8 391.0 410.5C388.5 408.2 384.7 404.7 382.7 402.2C380.7 399.7 379.4 395.9 377.7 393.9C376.0 391.9 373.3 390.6 371.1 388.9C368.9 387.2 365.1 384.5 362.8 382.3C360.6 380.1 357.8 376.5 356.1 374.0C354.4 371.5 352.7 368.2 351.2 365.7C349.7 363.2 347.4 360.1 346.2 357.4C345.0 354.7 344.1 350.5 342.9 347.5C341.7 344.5 338.9 340.5 337.9 337.5C336.9 334.5 337.4 329.5 336.2 327.5C335.0 325.5 331.6 325.4 329.6 324.2C327.6 323.0 325.6 320.6 322.9 319.2C320.2 317.8 313.5 315.6 311.3 315.1C309.1 314.6 308.7 314.3 308.0 315.9C307.3 317.5 306.4 322.9 306.7 325.9C307.0 328.9 309.0 332.6 309.7 335.8C310.4 339.0 310.1 344.5 311.3 347.5C312.5 350.5 315.8 353.1 318.0 355.8C320.2 358.5 324.1 363.0 326.3 365.7C328.5 368.4 330.9 371.5 332.9 374.0C334.9 376.5 337.9 379.8 339.5 382.3C341.1 384.8 342.2 388.1 343.7 390.6C345.2 393.1 347.9 396.4 349.5 398.9C351.1 401.4 352.8 404.7 354.5 407.2C356.2 409.7 359.4 413.0 361.1 415.5C362.8 418.0 365.0 421.8 366.1 423.8C367.2 425.8 368.2 427.5 368.6 429.0C369.0 430.5 368.9 430.9 369.0 434.0C369.1 437.1 369.0 444.6 369.0 450.0C369.0 455.4 371.3 467.0 369.0 470.0C366.7 473.0 355.8 473.0 353.5 470.0C351.2 467.0 353.5 455.4 353.5 450.0C353.5 444.6 353.6 437.1 353.5 434.0C353.4 430.9 353.9 430.8 352.8 429.0C351.7 427.2 348.7 424.1 346.2 422.1C343.7 420.1 339.4 417.2 336.2 415.5C333.0 413.8 328.1 412.5 324.6 410.5C321.1 408.5 316.2 404.9 313.0 402.2C309.8 399.5 302.8 394.0 303.0 392.3C303.2 390.6 312.1 392.1 314.6 390.6C317.1 389.1 319.8 384.5 319.6 382.3C319.4 380.1 315.2 378.2 313.0 375.7C310.8 373.2 307.2 368.4 304.7 365.7C302.2 363.0 298.5 359.9 296.4 357.4C294.3 354.9 292.1 352.1 290.6 349.1C289.1 346.1 288.0 341.2 286.4 337.5C284.8 333.8 281.4 327.9 279.8 324.2C278.2 320.5 277.1 315.8 275.6 312.6C274.1 309.4 271.0 305.0 269.8 302.6C268.6 300.2 267.9 297.9 267.3 296.8C266.7 295.7 266.8 297.0 266.0 295.5C265.2 294.0 263.2 289.2 262.0 287.0C260.8 284.8 259.6 282.2 258.0 280.5C256.4 278.8 252.5 276.9 251.0 275.5C249.5 274.1 249.6 272.7 248.0 271.5C246.4 270.3 243.2 268.6 240.5 267.5C237.8 266.4 233.6 265.1 230.0 264.0C226.4 262.9 219.8 261.0 216.5 260.0C213.2 259.0 209.3 258.9 208.0 257.5C206.7 256.1 207.7 253.0 207.5 250.5C207.3 248.0 207.6 243.7 206.5 241.0C205.4 238.3 202.2 235.1 200.0 232.5C197.8 229.9 194.2 226.8 192.0 224.0C189.8 221.2 186.5 216.7 185.5 214.0C184.5 211.3 186.7 208.5 185.5 206.0C184.3 203.5 178.8 199.8 177.5 197.5C176.2 195.2 177.8 192.9 176.5 191.0C175.2 189.1 169.9 186.0 168.5 184.5C167.1 183.0 167.4 182.3 167.0 181.0C166.6 179.7 166.2 179.2 166.0 176.0C165.8 172.8 166.0 165.4 166.0 160.0C166.0 154.6 43.0 143.0 166.0 140.0C289.0 137.0 863.0 137.0 986.0 140.0Z" fill="#f6f6d5" stroke="#e3e2bd" stroke-width=".5"/><path d="M957.0 180.0L963.0 180.0L968.0 190.0L972.0 197.0L974.0 203.0L969.0 200.0L963.0 192.0Z" fill="#ddf3fc"/><path d="M966.0 226.0L972.0 229.0L977.0 235.0L975.0 241.0L969.0 244.0" fill="none" stroke="#ddf3fc" stroke-width="1.6"/><path d="M327.9 359.5L330.0 358.8L336.2 368.0L335.0 370.6L331.0 366.0Z" fill="#efeac3"/><path d="M346.4 366.0L350.0 364.8L352.0 369.0L350.5 373.8L347.0 372.0Z" fill="#efeac3"/><path d="M214.0 268.6L218.0 268.0L223.0 269.4L222.0 270.6L216.0 270.0Z" fill="#efeac3"/><path d="M243.0 281.0L246.5 280.6L248.0 282.4L245.0 283.0Z" fill="#efeac3"/><path d="M243.0 289.6L244.6 289.4L245.0 291.4L243.6 291.6Z" fill="#efeac3"/><path d="M247.2 364.6L249.6 364.0L250.6 371.8L248.4 373.0Z" fill="#efeac3"/><path d="M299.2 382.0L301.0 381.6L301.6 388.0L300.0 388.4Z" fill="#efeac3"/><path d="M919.7 414.0C920.4 414.4 922.3 416.5 924.0 416.4C925.7 416.3 928.0 414.1 930.0 413.4C932.0 412.7 934.4 412.5 936.0 412.0C937.6 411.5 939.0 410.8 939.6 410.5" fill="none" stroke="#ece5bd" stroke-width="1.6"/><path d="M939.6 409.7C940.7 410.1 944.1 410.6 946.0 412.0C947.9 413.4 949.7 416.0 951.0 418.0C952.3 420.0 953.6 422.0 953.6 424.0C953.6 426.0 951.4 429.0 951.0 430.0" fill="none" stroke="#ece5bd" stroke-width="1.6"/><ellipse cx="1161.5" cy="303.6" rx="5.5" ry="3.4" transform="rotate(-38 1161.5 303.6)" fill="#d4eefa"/><path d="M1160.6 304.2L1163.4 302.2" stroke="#e8d9a0" stroke-width=".9"/><g clip-path="url(#lc)"><ellipse cx="800" cy="275" rx="175" ry="120" fill="#e9eec2" opacity=".55" filter="url(#bl2)"/><g fill="#e3ebba" opacity=".42" filter="url(#bl)"><ellipse cx="690" cy="215" rx="40" ry="22"/><ellipse cx="680" cy="250" rx="28" ry="14"/><ellipse cx="800" cy="275" rx="45" ry="30"/><ellipse cx="860" cy="230" rx="35" ry="18"/><ellipse cx="845" cy="290" rx="30" ry="28"/><ellipse cx="640" cy="320" rx="30" ry="28"/><ellipse cx="700" cy="320" rx="30" ry="20"/><ellipse cx="760" cy="300" rx="25" ry="25"/><ellipse cx="905" cy="255" rx="30" ry="20"/><ellipse cx="930" cy="215" rx="25" ry="20"/><ellipse cx="780" cy="200" rx="40" ry="16"/><ellipse cx="880" cy="365" rx="14" ry="40"/><ellipse cx="720" cy="340" rx="30" ry="10"/></g><g fill="#e3ebba" opacity=".32" filter="url(#bl)"><ellipse cx="590" cy="340" rx="22" ry="10"/><ellipse cx="430" cy="370" rx="30" ry="40"/><ellipse cx="460" cy="410" rx="25" ry="22"/><ellipse cx="390" cy="400" rx="14" ry="22"/><ellipse cx="440" cy="225" rx="30" ry="28"/><ellipse cx="360" cy="235" rx="26" ry="14"/><ellipse cx="215" cy="215" rx="10" ry="22"/><ellipse cx="470" cy="280" rx="8" ry="14"/><ellipse cx="300" cy="205" rx="18" ry="10"/><ellipse cx="540" cy="370" rx="14" ry="16"/></g><path d="M177.0 196.0Q200.1 202.6 222.2 212.0M222.2 212.0Q230.8 228.7 235.0 247.0M235.0 247.0Q241.1 258.0 248.4 268.3M248.4 268.3Q259.7 280.5 266.9 295.5M248.4 268.3Q259.3 260.3 270.0 252.0M270.0 252.0Q285.2 237.0 301.7 223.6M248.4 268.3Q302.2 266.0 354.0 280.6M266.9 295.5Q288.4 295.8 310.0 296.0M310.0 296.0Q330.7 284.6 354.0 280.6M354.0 280.6Q363.7 292.8 372.9 305.4M354.0 280.6Q355.1 264.8 361.0 250.0M372.9 305.4Q408.6 301.0 444.0 307.0M444.0 307.0Q446.8 310.8 449.4 314.7M361.0 250.0Q386.4 249.4 411.0 243.0M411.0 243.0Q429.3 243.1 447.0 248.0M447.0 248.0Q448.4 277.6 444.0 307.0M447.0 248.0Q452.7 243.3 458.0 238.0M447.0 248.0Q487.9 255.1 529.0 249.0M529.0 249.0Q566.1 245.1 603.0 239.1M603.0 239.1Q616.2 231.0 630.0 224.0M603.0 239.1Q603.5 251.0 608.0 262.0M608.0 262.0Q614.3 277.6 615.3 294.4M615.3 294.4Q610.5 306.8 609.0 320.0M609.0 320.0Q604.8 332.9 598.8 345.0M598.8 345.0Q593.4 353.3 586.0 360.0M586.0 360.0Q612.4 353.6 639.5 354.6M615.3 294.4Q629.5 323.7 639.5 354.6M615.3 294.4Q628.9 298.3 643.0 299.0M643.0 299.0Q655.4 296.6 668.0 297.0M668.0 297.0Q697.9 300.9 728.0 303.0M728.0 303.0Q742.6 302.7 757.0 301.0M757.0 301.0Q771.1 291.8 786.0 284.0M786.0 284.0Q806.8 279.8 827.4 274.8M827.4 274.8Q848.6 274.1 869.0 280.0M869.0 280.0Q876.7 273.7 886.0 270.0M886.0 270.0Q885.5 257.0 887.8 244.2M887.8 244.2Q897.6 235.7 906.2 226.0M906.2 226.0Q916.2 229.7 926.0 234.0M926.0 234.0Q933.3 230.5 941.0 228.0M941.0 228.0Q944.1 211.4 946.2 194.6M946.2 194.6Q956.1 201.9 965.8 209.6M730.6 245.7Q712.4 254.7 693.0 261.0M693.0 261.0Q675.8 251.6 657.0 246.0M657.0 246.0Q648.9 240.4 640.0 236.0M640.0 236.0Q621.6 239.3 603.0 239.1M730.6 245.7Q758.9 235.7 786.6 224.2M786.6 224.2Q811.0 226.5 835.4 228.3M835.4 228.3Q852.7 223.4 868.0 214.0M868.0 214.0Q886.1 208.4 903.0 200.0M786.6 224.2Q789.0 240.0 789.0 256.0M789.0 256.0Q785.1 269.7 786.0 284.0M730.6 245.7Q733.2 274.5 728.0 303.0M728.0 303.0Q736.8 313.7 745.0 325.0M745.0 325.0Q736.2 338.3 730.0 353.0M730.0 353.0Q746.7 344.3 765.0 340.0M765.0 340.0Q779.9 321.4 795.0 303.0M795.0 303.0Q808.9 286.2 827.4 274.8M765.0 340.0Q796.9 343.9 829.0 344.0M829.0 344.0Q851.6 345.9 874.1 343.6M874.1 343.6Q879.5 325.9 884.0 308.0M884.0 308.0Q894.9 299.3 903.0 288.0M903.0 288.0Q904.1 274.9 907.0 262.0M907.0 262.0Q914.6 254.5 921.0 246.0M921.0 246.0Q923.7 240.1 926.0 234.0M874.1 343.6Q878.8 352.9 884.0 362.0M884.0 362.0Q882.1 369.5 880.0 377.0M880.0 377.0Q869.3 382.3 860.2 390.0M880.0 377.0Q887.2 396.1 900.0 412.0M900.0 412.0Q899.6 422.0 899.0 432.0M860.2 390.0Q865.0 400.3 871.0 410.0M871.0 410.0Q886.7 418.8 899.0 432.0M827.4 274.8Q820.7 260.3 812.0 247.0M812.0 247.0Q824.2 238.3 835.4 228.3M827.4 274.8Q832.1 285.0 840.0 293.0M840.0 293.0Q861.1 303.0 884.0 308.0M639.5 354.6Q651.1 351.9 663.0 351.0M663.0 351.0Q669.5 350.2 676.0 350.0M676.0 350.0Q686.5 350.1 697.0 349.0M697.0 349.0Q704.7 345.6 713.0 345.0M713.0 345.0Q721.6 348.9 730.0 353.0M449.4 314.7Q456.7 345.1 456.7 376.3M372.9 368.0Q369.8 345.0 373.0 322.0M373.0 322.0Q371.6 313.7 372.9 305.4M586.0 360.0Q575.7 378.2 569.0 398.0M569.0 398.0Q564.3 415.9 555.0 432.0M449.4 314.7Q474.8 314.1 500.0 318.0M500.0 318.0Q511.9 315.5 524.0 314.0M524.0 314.0Q545.1 312.2 565.0 305.0M565.0 305.0Q589.3 295.9 615.3 294.4M527.0 290.0Q527.6 269.5 529.0 249.0M527.0 290.0Q525.3 302.0 524.0 314.0M301.7 223.6Q315.9 217.6 328.0 208.0M193.0 184.0Q184.3 189.1 177.0 196.0M193.0 184.0Q208.0 181.9 222.0 176.0M630.0 224.0Q651.2 212.7 674.0 205.0M674.0 205.0Q701.1 189.7 729.0 176.0M730.6 245.7Q725.6 242.1 721.0 238.0M721.0 238.0Q729.3 207.6 729.0 176.0M786.6 224.2Q791.4 215.1 793.0 205.0M793.0 205.0Q797.2 189.7 805.0 176.0M812.0 247.0Q801.0 252.8 789.0 256.0M887.8 244.2Q875.4 250.8 862.0 255.0M862.0 255.0Q845.7 266.6 827.4 274.8M456.7 376.3Q462.4 383.1 468.0 390.0M468.0 390.0Q473.9 394.2 480.0 398.0M480.0 398.0Q491.5 414.1 500.0 432.0M605.0 195.0Q607.9 217.2 603.0 239.1M605.0 195.0Q628.7 184.8 653.0 176.0M630.0 224.0Q640.4 199.5 653.0 176.0M586.0 360.0Q549.3 348.1 512.0 338.0M512.0 338.0Q504.1 339.3 497.0 343.0M497.0 343.0Q474.2 327.2 449.4 314.7M693.0 261.0Q677.0 269.4 661.0 278.0M661.0 278.0Q637.8 285.2 615.3 294.4M661.0 278.0Q663.9 287.7 668.0 297.0M668.0 297.0Q686.7 320.7 697.0 349.0M728.0 303.0Q717.5 322.9 713.0 345.0M730.6 245.7Q741.8 257.1 755.0 266.0M755.0 266.0Q769.3 277.1 786.0 284.0M795.0 303.0Q806.8 301.7 818.0 298.0M818.0 298.0Q828.9 295.1 840.0 293.0M795.0 303.0Q813.3 309.3 831.0 317.0M831.0 317.0Q840.1 323.9 847.0 333.0M847.0 333.0Q853.9 345.4 862.0 357.0M862.0 357.0Q864.7 361.2 866.0 366.0M866.0 366.0Q865.0 378.5 860.2 390.0M847.0 333.0Q861.1 336.9 874.1 343.6M840.0 293.0Q845.9 312.6 847.0 333.0M886.0 270.0Q895.0 278.5 903.0 288.0M886.0 270.0Q895.9 264.3 907.0 262.0M907.0 262.0Q922.3 258.2 938.0 260.0M938.0 260.0Q928.6 254.1 921.0 246.0M859.0 237.0Q846.6 234.3 835.4 228.3M859.0 237.0Q860.9 245.9 862.0 255.0M859.0 237.0Q874.0 238.1 887.8 244.2M906.2 226.0Q910.5 220.0 913.0 213.0M913.0 213.0Q908.3 206.3 903.0 200.0M903.0 200.0Q924.3 194.6 946.2 194.6M826.0 186.0Q832.6 206.7 835.4 228.3M826.0 186.0Q815.2 181.6 805.0 176.0M754.0 203.0Q770.8 212.8 786.6 224.2M754.0 203.0Q745.2 225.9 730.6 245.7M301.7 223.6Q310.0 235.5 321.0 245.0M321.0 245.0Q340.6 251.1 361.0 250.0M270.0 252.0Q295.5 248.2 321.0 245.0M235.0 247.0Q252.5 249.4 270.0 252.0M421.0 212.0Q418.3 228.2 411.0 243.0M421.0 212.0Q441.4 222.4 458.0 238.0M458.0 238.0Q462.4 209.2 470.0 181.0M470.0 181.0Q472.8 178.2 476.0 176.0M483.0 286.0Q467.2 264.9 447.0 248.0M483.0 286.0Q505.2 285.3 527.0 290.0M483.0 286.0Q465.3 299.8 444.0 307.0M505.0 268.0Q518.5 260.4 529.0 249.0M505.0 268.0Q493.9 276.9 483.0 286.0M506.0 295.0Q516.2 303.4 524.0 314.0M506.0 295.0Q516.5 292.7 527.0 290.0M587.0 276.0Q591.9 256.2 603.0 239.1M587.0 276.0Q601.1 285.3 615.3 294.4M587.0 276.0Q560.3 257.5 529.0 249.0M594.0 255.0Q589.1 265.0 587.0 276.0M594.0 255.0Q599.1 247.4 603.0 239.1M598.0 217.0Q601.5 227.8 603.0 239.1M598.0 217.0Q601.0 205.8 605.0 195.0M560.0 200.0Q582.2 194.8 605.0 195.0M560.0 200.0Q553.1 192.8 545.0 187.0M545.0 205.0Q536.7 226.9 529.0 249.0M545.0 205.0Q552.8 203.3 560.0 200.0M372.9 368.0Q373.2 380.0 372.0 392.0M372.0 392.0Q382.1 397.1 391.0 404.0M391.0 404.0Q398.9 419.1 410.0 432.0M427.0 345.0Q440.8 331.8 449.4 314.7M427.0 345.0Q439.9 362.5 456.7 376.3M456.7 376.3Q440.3 402.7 430.0 432.0M536.0 410.0Q545.8 394.9 552.0 378.0M552.0 378.0Q569.8 370.5 586.0 360.0M536.0 410.0Q546.6 420.1 555.0 432.0M543.0 362.0Q564.5 361.1 586.0 360.0M543.0 362.0Q547.9 369.8 552.0 378.0M604.0 393.0Q592.2 378.0 586.0 360.0M604.0 393.0Q618.5 370.8 639.5 354.6M604.0 393.0Q586.7 396.9 569.0 398.0M219.0 260.0Q234.1 262.9 248.4 268.3M219.0 260.0Q213.5 252.6 207.0 246.0M207.0 246.0Q200.7 224.9 188.0 207.0M188.0 207.0Q182.4 201.6 177.0 196.0M180.0 176.0Q185.9 181.0 193.0 184.0M245.0 203.0Q235.9 187.5 222.0 176.0M245.0 203.0Q253.5 229.5 270.0 252.0M276.0 309.0Q271.1 302.5 266.9 295.5M276.0 309.0Q293.2 314.3 309.0 323.0M309.0 323.0Q308.2 309.5 310.0 296.0M318.0 388.0Q292.7 350.8 276.0 309.0M328.0 208.0Q340.8 190.5 357.0 176.0M633.0 248.0Q623.1 270.8 615.3 294.4M633.0 248.0Q637.4 242.5 640.0 236.0M674.0 205.0Q663.0 224.5 657.0 246.0M721.0 238.0Q707.1 249.6 693.0 261.0M730.6 245.7Q711.4 252.3 693.0 261.0M745.0 325.0Q754.2 333.6 765.0 340.0M757.0 301.0Q763.9 319.9 765.0 340.0M755.0 266.0Q755.0 283.6 757.0 301.0M868.0 214.0Q861.8 224.8 859.0 237.0M869.0 280.0Q875.1 294.8 884.0 308.0M869.0 280.0Q853.9 285.2 840.0 293.0" fill="none" stroke="#efd6bb" stroke-width=".75" opacity=".9"/></g><g fill="none" stroke="#93d3ee" stroke-width="1" stroke-linejoin="round" stroke-linecap="round"><path d="M395.0 176.0C394.2 177.1 392.7 179.1 390.0 182.7C387.3 186.3 383.3 193.2 379.0 197.6C374.7 202.0 367.7 204.5 364.1 209.2C360.5 213.9 360.5 224.0 357.5 225.8C354.5 227.6 350.0 219.0 345.9 220.0C341.8 221.0 336.5 231.0 332.6 231.6C328.7 232.2 325.4 224.5 322.6 223.3C319.8 222.1 317.1 224.3 316.0 224.5"/><path d="M310.2 247.4C311.2 248.5 314.5 251.4 316.0 254.0C317.5 256.6 319.7 260.4 319.3 263.2C318.9 266.0 314.5 268.0 313.5 270.6C312.5 273.2 314.1 276.8 313.5 279.0C312.9 281.2 310.2 282.1 310.2 284.0C310.2 285.9 313.9 288.6 313.5 290.5C313.1 292.4 309.1 293.6 307.7 295.5C306.3 297.4 306.1 300.1 305.0 302.0C303.9 303.9 300.5 304.8 301.0 307.0C301.5 309.2 306.8 313.7 308.0 315.0"/><path d="M433.1 188.5C435.1 188.6 440.6 188.0 445.0 189.0C449.4 190.0 456.7 191.5 459.7 194.3C462.7 197.1 462.7 201.5 463.0 205.9C463.3 210.3 463.2 215.8 461.3 220.8C459.4 225.8 454.0 230.8 451.4 235.8C448.8 240.8 447.0 245.4 445.6 250.7C444.2 255.9 444.4 262.3 443.1 267.3C441.9 272.3 439.4 276.5 438.1 280.6C436.9 284.8 435.1 288.6 435.6 292.2C436.2 295.8 439.3 298.9 441.4 302.2C443.5 305.5 446.9 310.5 448.0 312.1"/><path d="M486.2 176.0C486.2 176.8 483.7 179.6 486.2 181.0C488.7 182.4 494.8 184.0 501.2 184.3C507.6 184.6 518.3 182.1 524.4 182.7C530.5 183.2 530.5 186.1 537.7 187.6C544.9 189.1 561.0 192.9 567.6 191.8C574.2 190.7 575.4 183.6 577.5 181.0C579.6 178.4 579.6 176.8 580.0 176.0"/><path d="M590.8 176.0C590.8 176.8 589.3 179.3 590.8 181.0C592.3 182.7 597.8 184.9 600.0 186.0C602.2 187.1 602.4 185.1 604.1 187.6C605.8 190.1 608.5 196.5 610.0 200.9C611.5 205.3 610.8 210.6 613.3 214.2C615.8 217.8 620.2 219.2 624.9 222.5C629.6 225.8 636.5 231.0 641.5 234.1C646.5 237.2 649.8 239.8 654.8 240.8C659.8 241.8 666.1 238.8 671.4 239.9C676.6 241.0 682.4 244.5 686.3 247.4C690.2 250.3 691.8 254.3 694.6 257.3C697.4 260.3 699.9 263.2 702.9 265.6C705.9 268.0 711.2 270.5 712.9 271.5"/><path d="M704.8 330.0C705.2 331.3 705.8 335.3 707.0 338.0C708.2 340.7 709.8 343.7 712.0 346.0C714.2 348.3 717.0 350.0 720.0 352.0C723.0 354.0 726.7 356.0 730.0 358.0C733.3 360.0 738.3 363.0 740.0 364.0"/><path d="M830.0 176.0C829.3 177.2 829.0 181.3 826.0 183.0C823.0 184.7 816.3 186.3 812.0 186.0C807.7 185.7 802.0 181.8 800.0 181.0"/><path d="M726.1 176.0C727.1 177.6 730.0 183.0 732.0 185.5C734.0 188.0 736.0 188.2 737.8 191.0C739.6 193.8 741.3 200.1 742.7 202.6C744.1 205.1 746.4 203.6 746.1 205.9C745.8 208.2 742.8 213.1 741.1 216.7C739.4 220.3 737.5 224.1 736.1 227.5C734.7 230.9 733.8 234.4 732.8 237.4C731.8 240.4 732.0 242.9 730.3 245.7C728.6 248.5 724.6 251.2 722.8 254.0C721.0 256.8 721.1 259.4 719.5 262.3C717.9 265.2 714.4 268.4 712.9 271.5C711.4 274.6 710.4 277.7 710.4 280.6C710.4 283.5 712.0 285.2 712.9 288.9C713.8 292.6 716.1 298.7 715.6 302.6C715.1 306.6 711.5 309.3 709.8 312.6C708.1 315.9 706.4 319.7 705.6 322.6C704.8 325.5 704.9 328.8 704.8 330.0"/></g><g fill="none" stroke="#8a8a82" stroke-width=".75" stroke-linejoin="round"><path d="M238.0 176.0L238.0 181.0L310.2 247.4"/><path d="M310.2 247.4L308.5 235.8L309.3 225.8L316.0 224.5L320.1 226.6L320.3 176.0"/><path d="M320.1 206.2L652.6 206.2"/><path d="M406.0 206.2L406.0 322.8"/><path d="M406.0 176.0L406.0 206.2"/><path d="M525.5 176.0L525.5 206.2"/><path d="M509.0 206.2L509.0 309.8L447.4 309.8"/><path d="M509.0 216.8L560.5 216.8L560.5 257.4"/><path d="M560.5 257.4L566.0 260.5L570.9 262.3L576.0 265.6L581.0 264.8L587.5 267.3L593.0 270.4L599.1 271.5L604.0 270.6L610.0 273.1L616.0 272.2L621.6 273.9L628.0 272.0L633.2 271.5L638.0 269.6L643.2 270.6L649.0 274.0L654.8 276.4L659.0 278.0L662.7 278.9"/><path d="M652.6 176.0L652.6 216.8L655.6 239.1L655.1 270.6"/><path d="M652.6 216.8L728.6 216.8L732.0 221.7L726.1 227.2L735.3 227.2"/><path d="M662.7 278.9L662.7 310.0L663.5 313.0L667.4 317.6L671.5 327.5L670.8 333.0L669.0 339.2L666.0 348.0L664.9 354.1"/><path d="M662.7 289.4L710.9 289.4"/><path d="M726.1 176.0L726.1 181.0L732.0 185.5L737.8 191.0L739.0 197.0L742.7 202.6L746.1 205.9L743.0 211.0L741.1 216.7L737.5 222.0L736.1 227.5L733.4 232.0L732.8 237.4L730.0 241.0L730.3 245.7L726.0 250.0L722.8 254.0L720.0 258.0L719.5 262.3L715.5 267.0L712.9 271.5L710.0 276.0L710.4 280.6L713.0 285.0L712.9 288.9L715.4 296.0L715.6 302.6L711.0 308.0L709.8 312.6L706.5 318.0L705.6 322.6L704.8 330.1"/><path d="M704.8 330.1L735.5 330.1L735.2 336.7L736.3 341.2"/><path d="M746.1 205.9L751.0 201.0L757.7 197.6L761.0 192.0L766.0 187.6L774.0 189.0L782.6 187.6L789.0 184.0L795.9 181.0L799.0 176.0"/><path d="M739.4 216.7L765.1 215.9L765.1 213.6L839.6 215.0L874.0 215.4L972.8 216.2"/><path d="M730.3 248.6L849.5 248.6"/><path d="M763.3 248.6L759.6 296.0L758.8 316.0L759.3 340.5"/><path d="M806.6 248.6L815.2 296.0L817.4 303.8L815.6 309.0L813.5 312.6L814.6 322.0L816.0 330.1"/><path d="M772.9 330.1L816.0 330.1L819.3 335.5L865.8 339.6L866.6 342.5L869.1 335.0L877.4 334.4"/><path d="M772.9 330.1L773.6 335.5L776.2 340.4"/><path d="M874.0 215.4L869.9 222.5L863.0 225.0L856.6 229.1L850.0 231.0L846.0 235.0L840.0 236.6L835.7 238.3L829.0 244.1L829.0 248.6"/><path d="M849.5 248.6L853.0 246.2L859.9 244.9L884.8 244.1L885.0 248.0L888.1 251.5L908.0 252.4L928.0 272.6"/><path d="M849.5 248.6L853.3 264.0L857.0 269.0L861.6 274.0L866.0 279.5L871.5 283.9L875.0 291.0L879.0 297.2L881.0 302.0L884.0 307.1L885.8 312.5"/><path d="M839.6 215.0L852.0 206.0L868.2 196.0L874.9 202.6L882.0 201.0L889.8 197.6L896.0 190.0L903.1 181.0L905.0 176.0"/><path d="M856.6 176.0L858.0 181.0L863.0 188.0L868.2 196.0"/></g><path d="M267.3 298.6L307.4 295.6L307.6 300.0L371.0 322.8L420.3 322.8L420.3 314.6L449.4 314.6L456.6 322.6L464.9 329.2L474.9 335.8L479.8 344.1L481.5 352.4L488.1 360.7L498.1 365.7L506.4 369.9L511.4 362.4L514.7 354.9L521.3 352.4L534.6 354.1L542.9 360.7L549.5 369.0L554.5 379.0L561.2 388.9L568.6 397.2L569.5 405.5L574.4 413.8L577.8 419.6L589.4 422.1L599.3 426.3L609.3 428.0" fill="none" stroke="#7d7d76" stroke-width="1.5" stroke-linejoin="round"/><g font-family="'Liberation Sans',sans-serif" font-size="8.2" fill="#999992"><text x="345.9" y="264" textLength="30.7" lengthAdjust="spacing">Arizona</text><text x="431.8" y="261.7" textLength="49.1" lengthAdjust="spacing">New Mexico</text><text x="561.7" y="227.5" textLength="40.4" lengthAdjust="spacing">Oklahoma</text><text x="560.3" y="321.2" textLength="24.1" lengthAdjust="spacing">Texas</text><text x="678.3" y="194" textLength="34.2" lengthAdjust="spacing">Missouri</text><text x="673.4" y="239.1" textLength="37.5" lengthAdjust="spacing">Arkansas</text><text x="665.8" y="325.9" textLength="38.7" lengthAdjust="spacing">Louisiana</text><text x="715.4" y="296.7" textLength="44.3" lengthAdjust="spacing">Mississippi</text><text x="768" y="296" textLength="35.3" lengthAdjust="spacing">Alabama</text><text x="828.5" y="298.5" textLength="30.7" lengthAdjust="spacing">Georgia</text><text x="793.9" y="196.8" textLength="37.1" lengthAdjust="spacing">Kentucky</text></g><g fill="#fff" stroke="#333" stroke-width=".9"><circle cx="222.4" cy="212.2" r="2.1"/><circle cx="301.7" cy="224.0" r="2.55"/><circle cx="248.7" cy="268.2" r="2.55"/><circle cx="267.1" cy="295.5" r="2.55"/><circle cx="354.1" cy="280.7" r="2.55"/><circle cx="372.9" cy="305.5" r="2.1"/><circle cx="373" cy="368.1" r="2.1"/><circle cx="449.4" cy="315" r="2.1"/><circle cx="456.7" cy="376.6" r="2.1"/><circle cx="599" cy="345" r="2.55"/><circle cx="639.7" cy="354.8" r="2.55"/><circle cx="874.1" cy="343.6" r="2.55"/><circle cx="860.4" cy="390.1" r="2.55"/><circle cx="946.4" cy="194.8" r="2.1"/><circle cx="966" cy="209.7" r="2.1"/><circle cx="906.1" cy="226.1" r="2.1"/><circle cx="888.1" cy="244.1" r="2.55"/><circle cx="835.4" cy="228.3" r="2.1"/><circle cx="827.4" cy="274.8" r="2.55"/><circle cx="603" cy="239.1" r="2.1"/><circle cx="615.3" cy="294.4" r="2.55"/><circle cx="730.6" cy="245.7" r="2.55"/><circle cx="786.6" cy="224.2" r="2.1"/></g><g font-family="'Liberation Sans',sans-serif" fill="#111" stroke="#f6f6d8" stroke-width="1.1" stroke-opacity=".75" paint-order="stroke" stroke-linejoin="round"><text x="223.9" y="207.9" font-size="7.6" font-weight="700" textLength="25.4" lengthAdjust="spacingAndGlyphs">Fresno</text><text x="303.5" y="219.5" font-size="8.6" font-weight="700" textLength="42.4" lengthAdjust="spacingAndGlyphs">Las Vegas</text><text x="250.4" y="263.7" font-size="8.6" font-weight="700" textLength="50.6" lengthAdjust="spacingAndGlyphs">Los Angeles</text><text x="269.2" y="290.9" font-size="8.6" font-weight="700" textLength="41.5" lengthAdjust="spacingAndGlyphs">San Diego</text><text x="355.8" y="275.9" font-size="8.6" font-weight="700" textLength="33.2" lengthAdjust="spacingAndGlyphs">Phoenix</text><text x="375.2" y="301.6" font-size="7.6" font-weight="700" textLength="25.8" lengthAdjust="spacingAndGlyphs">Tucson</text><text x="374.9" y="363.7" font-size="7.6" font-weight="700" textLength="39.0" lengthAdjust="spacingAndGlyphs">Hermosillo</text><text x="451" y="310.6" font-size="7.6" font-weight="700" textLength="27.9" lengthAdjust="spacingAndGlyphs">El Paso</text><text x="457.9" y="372.3" font-size="7.6" font-weight="700" textLength="39.4" lengthAdjust="spacingAndGlyphs">Chihuahua</text><text x="601" y="340" font-size="8.6" font-weight="700" textLength="26.2" lengthAdjust="spacingAndGlyphs">Austin</text><text x="641.5" y="349.9" font-size="8.6" font-weight="700" textLength="34.5" lengthAdjust="spacingAndGlyphs">Houston</text><text x="557" y="428.4" font-size="7.6" font-weight="700" textLength="42.0" lengthAdjust="spacingAndGlyphs">Monterrey</text><text x="731.7" y="346.6" font-size="7.6" font-weight="700" textLength="46.1" lengthAdjust="spacingAndGlyphs">New Orleans</text><text x="875.9" y="338.8" font-size="8.6" font-weight="700" textLength="50.7" lengthAdjust="spacingAndGlyphs">Jacksonville</text><text x="862.8" y="384.8" font-size="8.6" font-weight="700" textLength="27.1" lengthAdjust="spacingAndGlyphs">Tampa</text><text x="900.9" y="426.8" font-size="8.6" font-weight="700" textLength="24.6" lengthAdjust="spacingAndGlyphs">Miami</text><text x="947.9" y="190.6" font-size="7.6" font-weight="700" textLength="37.3" lengthAdjust="spacingAndGlyphs">Richmond</text><text x="967.5" y="205.6" font-size="7.6" fill="#2a2a2a" textLength="26.0" lengthAdjust="spacingAndGlyphs">Norfolk</text><text x="907.7" y="221.7" font-size="7.6" fill="#2a2a2a" textLength="43.2" lengthAdjust="spacingAndGlyphs">Greensboro</text><text x="889.5" y="239.1" font-size="8.6" font-weight="700" textLength="37.6" lengthAdjust="spacingAndGlyphs">Charlotte</text><text x="837.3" y="224.2" font-size="7.6" fill="#2a2a2a" textLength="33.1" lengthAdjust="spacingAndGlyphs">Knoxville</text><text x="829" y="269.8" font-size="8.6" font-weight="700" textLength="28.9" lengthAdjust="spacingAndGlyphs">Atlanta</text><text x="604.6" y="235" font-size="7.6" font-weight="700" textLength="53.5" lengthAdjust="spacingAndGlyphs">Oklahoma City</text><text x="616.9" y="289.7" font-size="8.6" font-weight="700" textLength="24.9" lengthAdjust="spacingAndGlyphs">Dallas</text><text x="732.4" y="240.8" font-size="8.6" font-weight="700" textLength="36.9" lengthAdjust="spacingAndGlyphs">Memphis</text><text x="788" y="220" font-size="7.6" font-weight="700" textLength="32.7" lengthAdjust="spacingAndGlyphs">Nashville</text></g><circle cx="729.9" cy="350.9" r="12.3" fill="rgba(64,203,225,.7)" stroke="#17383c" stroke-width="1.1"/><path d="M725.5 345.29999999999995h1.5v1.1h7.5l-1.4 2.8l1.4 2.8h-7.5v5.5h-1.5z" fill="#000" stroke="#fff" stroke-width="1.3" paint-order="stroke" stroke-linejoin="round"/><circle cx="920.5" cy="228" r="12.3" fill="rgba(64,203,225,.7)" stroke="#17383c" stroke-width="1.1"/><path d="M916.1 222.4h1.5v1.1h7.5l-1.4 2.8l1.4 2.8h-7.5v5.5h-1.5z" fill="#000" stroke="#fff" stroke-width="1.3" paint-order="stroke" stroke-linejoin="round"/><circle cx="878.7" cy="378.6" r="12.3" fill="rgba(110,185,95,.75)" stroke="#2f5a2a" stroke-width="1.1"/><path d="M874.3000000000001 373.0h1.5v1.1h7.5l-1.4 2.8l1.4 2.8h-7.5v5.5h-1.5z" fill="#000" stroke="#fff" stroke-width="1.3" paint-order="stroke" stroke-linejoin="round"/></svg><div style="left:11.5px;top:11.3px;width:24.4px;height:48.1px;background:#fff;box-shadow:0 1px 2px rgba(0,0,0,.3)"><div style="left:0;top:24px;width:24.4px;height:1px;background:#e4e4e4"></div><div style="left:6.4px;top:11.4px;width:11.6px;height:1px;background:#7a7a7a"></div><div style="left:11.7px;top:6.1px;width:1px;height:11.6px;background:#7a7a7a"></div><div style="left:6.4px;top:35.4px;width:11.6px;height:1px;background:#7a7a7a"></div></div></div>
<main style="left:0;top:0;width:1446px;height:783px;z-index:1"><div style="left:1226.40px;top:461.10px;width:88.70px;height:27.50px;background:#fff;border:1px solid #dcdcdc;border-radius:14px"></div><div style="left:1230.70px;top:467.30px;width:26.50px;height:15.20px;background:#ff9800;border-radius:7.6px"></div><span class="t" style="font-size:8.2px;line-height:8.2px;top:472.00px;color:#fff;font-weight:700;transform:scaleX(0.9221);left:1239.80px;">48</span><span class="t" style="font-size:11.4px;line-height:11.4px;top:469.00px;color:#222;transform:scaleX(0.8601);left:1263.90px;">ACTIVE</span><div style="left:1322.10px;top:461.10px;width:91.70px;height:27.50px;background:#fff;border:1px solid #dcdcdc;border-radius:14px"></div><div style="left:1326.10px;top:467.30px;width:26.50px;height:15.20px;background:#6c757d;border-radius:7.6px"></div><span class="t" style="font-size:8.2px;line-height:8.2px;top:472.00px;color:#fff;font-weight:700;transform:scaleX(0.9002);left:1335.30px;">13</span><span class="t" style="font-size:11.4px;line-height:11.4px;top:469.00px;color:#222;transform:scaleX(0.8283);left:1359.30px;">CLOSED</span><div style="left:725.10px;top:429.00px;width:37.50px;height:22.20px;background:#fff;box-shadow:0 1px 2px rgba(0,0,0,.22);border-radius:0 0 2px 2px"></div><svg class="i" style="left:740.00px;top:438.00px" width="7.20" height="3.80" viewBox="0 0 7.2 3.8" ><path d="M0 3.8H7.2L3.6 0Z" fill="#555"/></svg><div style="left:70.30px;top:495.00px;width:1349.60px;height:289.00px;background:#fafafa;border:1px solid #dcdcdc;border-bottom:none"></div><span class="t" style="font-size:12.9px;line-height:12.9px;top:503.00px;color:#3d3d3d;transform:scaleX(0.9836);-webkit-text-stroke:0.18px #3d3d3d;left:75.00px;">Tracking #</span><svg class="i" style="left:137.70px;top:503.00px" width="8.00" height="10.40" viewBox="0 0 8 10.4" ><path d="M0 4.4L4 0L8 4.4ZM0 6L4 10.4L8 6Z" fill="#c9c9c9"/></svg><span class="t" style="font-size:12.9px;line-height:12.9px;top:503.00px;color:#3d3d3d;transform:scaleX(1.0040);-webkit-text-stroke:0.18px #3d3d3d;left:169.30px;">Mission Name</span><svg class="i" style="left:254.80px;top:503.00px" width="8.00" height="10.40" viewBox="0 0 8 10.4" ><path d="M0 4.4L4 0L8 4.4ZM0 6L4 10.4L8 6Z" fill="#c9c9c9"/></svg><span class="t" style="font-size:12.9px;line-height:12.9px;top:503.00px;color:#3d3d3d;-webkit-text-stroke:0.18px #3d3d3d;left:391.00px;">Originator</span><svg class="i" style="left:451.10px;top:503.00px" width="8.00" height="10.40" viewBox="0 0 8 10.4" ><path d="M0 4.4L4 0L8 4.4ZM0 6L4 10.4L8 6Z" fill="#c9c9c9"/></svg><span class="t" style="font-size:12.9px;line-height:12.9px;top:503.00px;color:#3d3d3d;transform:scaleX(0.9769);-webkit-text-stroke:0.18px #3d3d3d;left:619.70px;">Assigned To</span><svg class="i" style="left:693.20px;top:503.00px" width="8.00" height="10.40" viewBox="0 0 8 10.4" ><path d="M0 4.4L4 0L8 4.4ZM0 6L4 10.4L8 6Z" fill="#c9c9c9"/></svg><span class="t" style="font-size:12.9px;line-height:12.9px;top:503.00px;color:#3d3d3d;transform:scaleX(1.0048);-webkit-text-stroke:0.18px #3d3d3d;left:857.50px;">Priority</span><svg class="i" style="left:901.30px;top:503.00px" width="8.00" height="10.40" viewBox="0 0 8 10.4" ><path d="M0 4.4L4 0L8 4.4ZM0 6L4 10.4L8 6Z" fill="#c9c9c9"/></svg><span class="t" style="font-size:12.9px;line-height:12.9px;top:503.00px;color:#3d3d3d;transform:scaleX(0.9647);-webkit-text-stroke:0.18px #3d3d3d;left:979.40px;">Time Due</span><svg class="i" style="left:1036.80px;top:503.00px" width="8.00" height="10.40" viewBox="0 0 8 10.4" ><path d="M0 4.4L4 0L8 4.4ZM0 6L4 10.4L8 6Z" fill="#c9c9c9"/></svg><span class="t" style="font-size:12.9px;line-height:12.9px;top:503.00px;color:#3d3d3d;-webkit-text-stroke:0.18px #3d3d3d;left:1136.40px;">Status</span><svg class="i" style="left:1176.40px;top:503.00px" width="8.00" height="10.40" viewBox="0 0 8 10.4" ><path d="M0 4.4L4 0L8 4.4ZM0 6L4 10.4L8 6Z" fill="#c9c9c9"/></svg><span class="t" style="font-size:12.9px;line-height:12.9px;top:503.00px;color:#3d3d3d;transform:scaleX(0.9819);-webkit-text-stroke:0.18px #3d3d3d;left:1228.10px;">Last Updated</span><svg class="i" style="left:1306.80px;top:508.40px" width="7.40" height="4.00" viewBox="0 0 7.4 4" ><path d="M0 0H7.4L3.7 4Z" fill="#333"/></svg><div style="left:71.30px;top:521.40px;width:1347.60px;height:25.80px;background:#ececec;border-bottom:1px solid rgba(0,0,0,.035);"></div><span class="t" style="font-size:10.8px;line-height:10.8px;top:529.00px;color:#333;transform:scaleX(0.9392);left:74.80px;">2405-0001</span><span class="t" style="font-size:10.8px;line-height:10.8px;top:529.00px;color:#333;transform:scaleX(0.9494);left:169.10px;">Search and Rescue teams</span><span class="t" style="font-size:10.8px;line-height:10.8px;top:529.00px;color:#333;transform:scaleX(0.9598);left:391.00px;">Healthcare - CMD Incident Commander</span><span class="t" style="font-size:10.8px;line-height:10.8px;top:529.00px;color:#333;transform:scaleX(0.9522);left:619.70px;">Corporate EOC - Logistics Section Chief</span><div class="bdg" style="left:856.90px;top:527.10px;width:88.00px;height:15.20px;background:#f44336"></div><span class="t" style="font-size:7.8px;line-height:7.8px;top:531.00px;color:#fff;font-weight:700;transform:scaleX(0.9180);left:865.90px;">IMMEDIATE (4 HRS.)</span><span class="t" style="font-size:10.8px;line-height:10.8px;top:529.00px;color:#333;transform:scaleX(0.9962);left:979.40px;">04/30/2024 22:00:00</span><div style="left:1085.70px;top:527.00px;width:15.00px;height:15.00px;background:#f34235;border-radius:50%"></div><div style="left:1092.50px;top:530.50px;width:1.60px;height:4.70px;background:#fff;border-radius:.5px"></div><div style="left:1092.40px;top:536.20px;width:1.80px;height:1.80px;background:#fff;border-radius:50%"></div><div class="bdg" style="left:1136.40px;top:527.10px;width:68.60px;height:15.20px;background:#00bcd4"></div><span class="t" style="font-size:7.8px;line-height:7.8px;top:531.00px;color:#fff;font-weight:700;transform:scaleX(0.8717);left:1145.40px;">NEW REQUEST</span><span class="t" style="font-size:10.8px;line-height:10.8px;top:529.00px;color:#333;transform:scaleX(0.9932);left:1228.10px;">05/02/2024 09:35:20</span><div style="left:1400.00px;top:533.00px;width:3.00px;height:3.00px;background:#444;border-radius:50%"></div><div style="left:1405.00px;top:533.00px;width:3.00px;height:3.00px;background:#444;border-radius:50%"></div><div style="left:1410.00px;top:533.00px;width:3.00px;height:3.00px;background:#444;border-radius:50%"></div><div style="left:71.30px;top:547.20px;width:1347.60px;height:25.80px;background:#fafafa;border-bottom:1px solid rgba(0,0,0,.035);"></div><span class="t" style="font-size:10.8px;line-height:10.8px;top:555.00px;color:#333;transform:scaleX(0.9392);left:74.80px;">2104-0001</span><span class="t" style="font-size:10.8px;line-height:10.8px;top:555.00px;color:#333;transform:scaleX(0.8654);left:169.10px;">PPE</span><span class="t" style="font-size:10.8px;line-height:10.8px;top:555.00px;color:#333;transform:scaleX(0.9598);left:391.00px;">Healthcare - CMD Incident Commander</span><span class="t" style="font-size:10.8px;line-height:10.8px;top:555.00px;color:#333;transform:scaleX(0.9598);left:619.70px;">Healthcare - CMD Incident Commander</span><div class="bdg" style="left:856.90px;top:552.90px;width:88.00px;height:15.20px;background:#f44336"></div><span class="t" style="font-size:7.8px;line-height:7.8px;top:557.00px;color:#fff;font-weight:700;transform:scaleX(0.9180);left:865.90px;">IMMEDIATE (4 HRS.)</span><span class="t" style="font-size:10.8px;line-height:10.8px;top:555.00px;color:#333;transform:scaleX(0.9962);left:979.40px;">09/25/2024 09:41:33</span><div class="bdg" style="left:1136.40px;top:552.90px;width:65.60px;height:15.20px;background:#4caf50"></div><span class="t" style="font-size:7.8px;line-height:7.8px;top:557.00px;color:#fff;font-weight:700;transform:scaleX(0.8789);left:1145.40px;">IN PROGRESS</span><span class="t" style="font-size:10.8px;line-height:10.8px;top:555.00px;color:#333;transform:scaleX(0.9932);left:1228.10px;">03/07/2024 14:54:20</span><div style="left:1400.00px;top:559.00px;width:3.00px;height:3.00px;background:#444;border-radius:50%"></div><div style="left:1405.00px;top:559.00px;width:3.00px;height:3.00px;background:#444;border-radius:50%"></div><div style="left:1410.00px;top:559.00px;width:3.00px;height:3.00px;background:#444;border-radius:50%"></div><div style="left:71.30px;top:573.00px;width:1347.60px;height:25.80px;background:#d6d8db;border-bottom:1px solid rgba(255,255,255,.18);"></div><span class="t" style="font-size:10.8px;line-height:10.8px;top:581.00px;color:#333;transform:scaleX(0.9392);left:74.80px;">2105-0008</span><span class="t" style="font-size:10.8px;line-height:10.8px;top:581.00px;color:#333;transform:scaleX(0.9423);left:169.10px;">Generator needed @ Stadium</span><span class="t" style="font-size:10.8px;line-height:10.8px;top:581.00px;color:#333;transform:scaleX(0.9598);left:391.00px;">Healthcare - CMD Incident Commander</span><span class="t" style="font-size:10.8px;line-height:10.8px;top:581.00px;color:#333;transform:scaleX(0.9598);left:619.70px;">Healthcare - CMD Incident Commander</span><div class="bdg" style="left:856.90px;top:578.70px;width:83.00px;height:15.20px;background:#6c757d"></div><span class="t" style="font-size:7.8px;line-height:7.8px;top:583.00px;color:#fff;font-weight:700;transform:scaleX(0.9038);left:865.90px;">ROUTINE (24 HRS.)</span><span class="t" style="font-size:10.8px;line-height:10.8px;top:581.00px;color:#333;transform:scaleX(0.9962);left:979.40px;">09/25/2024 09:41:33</span><div class="bdg" style="left:1136.40px;top:578.70px;width:56.90px;height:15.20px;background:#6c757d"></div><span class="t" style="font-size:7.8px;line-height:7.8px;top:583.00px;color:#fff;font-weight:700;transform:scaleX(0.8978);left:1145.40px;">COMPLETE</span><span class="t" style="font-size:10.8px;line-height:10.8px;top:581.00px;color:#333;transform:scaleX(0.9932);left:1228.10px;">09/25/2023 14:14:23</span><div style="left:1400.00px;top:584.00px;width:3.00px;height:3.00px;background:#444;border-radius:50%"></div><div style="left:1405.00px;top:584.00px;width:3.00px;height:3.00px;background:#444;border-radius:50%"></div><div style="left:1410.00px;top:584.00px;width:3.00px;height:3.00px;background:#444;border-radius:50%"></div><div style="left:71.30px;top:598.80px;width:1347.60px;height:25.80px;background:#d6d8db;border-bottom:1px solid rgba(255,255,255,.18);"></div><span class="t" style="font-size:10.8px;line-height:10.8px;top:607.00px;color:#333;transform:scaleX(0.9392);left:74.80px;">2105-0005</span><span class="t" style="font-size:10.8px;line-height:10.8px;top:607.00px;color:#333;transform:scaleX(0.9871);left:169.10px;">Masks</span><span class="t" style="font-size:10.8px;line-height:10.8px;top:607.00px;color:#333;transform:scaleX(0.9598);left:391.00px;">Healthcare - CMD Incident Commander</span><span class="t" style="font-size:10.8px;line-height:10.8px;top:607.00px;color:#333;transform:scaleX(0.9598);left:619.70px;">Healthcare - CMD Incident Commander</span><div class="bdg" style="left:856.90px;top:604.50px;width:88.00px;height:15.20px;background:#6c757d"></div><span class="t" style="font-size:7.8px;line-height:7.8px;top:609.00px;color:#fff;font-weight:700;transform:scaleX(0.9180);left:865.90px;">IMMEDIATE (4 HRS.)</span><span class="t" style="font-size:10.8px;line-height:10.8px;top:607.00px;color:#333;transform:scaleX(0.9962);left:979.40px;">09/25/2024 09:41:33</span><div class="bdg" style="left:1136.40px;top:604.50px;width:56.90px;height:15.20px;background:#6c757d"></div><span class="t" style="font-size:7.8px;line-height:7.8px;top:609.00px;color:#fff;font-weight:700;transform:scaleX(0.8978);left:1145.40px;">COMPLETE</span><span class="t" style="font-size:10.8px;line-height:10.8px;top:607.00px;color:#333;transform:scaleX(0.9932);left:1228.10px;">09/25/2023 14:13:21</span><div style="left:1400.00px;top:610.00px;width:3.00px;height:3.00px;background:#444;border-radius:50%"></div><div style="left:1405.00px;top:610.00px;width:3.00px;height:3.00px;background:#444;border-radius:50%"></div><div style="left:1410.00px;top:610.00px;width:3.00px;height:3.00px;background:#444;border-radius:50%"></div><div style="left:71.30px;top:624.60px;width:1347.60px;height:25.80px;background:#ececec;border-bottom:1px solid rgba(0,0,0,.035);"></div><span class="t" style="font-size:10.8px;line-height:10.8px;top:633.00px;color:#333;transform:scaleX(0.9392);left:74.80px;">2303-0001</span><span class="t" style="font-size:10.8px;line-height:10.8px;top:633.00px;color:#333;transform:scaleX(0.9551);left:169.10px;">Utility Outage</span><span class="t" style="font-size:10.8px;line-height:10.8px;top:633.00px;color:#333;transform:scaleX(0.9598);left:391.00px;">Healthcare - CMD Incident Commander</span><span class="t" style="font-size:10.8px;line-height:10.8px;top:633.00px;color:#333;transform:scaleX(0.9598);left:619.70px;">Healthcare - CMD Incident Commander</span><div class="bdg" style="left:856.90px;top:630.30px;width:84.70px;height:15.20px;background:#ff9800"></div><span class="t" style="font-size:7.8px;line-height:7.8px;top:634.00px;color:#4a2c00;font-weight:700;transform:scaleX(0.9056);left:865.90px;">PRIORITY (12 HRS.)</span><span class="t" style="font-size:10.8px;line-height:10.8px;top:633.00px;color:#333;transform:scaleX(0.9962);left:979.40px;">09/25/2024 09:41:33</span><div class="bdg" style="left:1136.40px;top:630.30px;width:54.20px;height:15.20px;background:#f44336"></div><span class="t" style="font-size:7.8px;line-height:7.8px;top:634.00px;color:#fff;font-weight:700;transform:scaleX(0.8703);left:1145.40px;">REJECTED</span><span class="t" style="font-size:10.8px;line-height:10.8px;top:633.00px;color:#333;transform:scaleX(0.9932);left:1228.10px;">09/25/2023 14:12:06</span><div style="left:1400.00px;top:636.00px;width:3.00px;height:3.00px;background:#444;border-radius:50%"></div><div style="left:1405.00px;top:636.00px;width:3.00px;height:3.00px;background:#444;border-radius:50%"></div><div style="left:1410.00px;top:636.00px;width:3.00px;height:3.00px;background:#444;border-radius:50%"></div><div style="left:71.30px;top:650.40px;width:1347.60px;height:25.80px;background:#fafafa;border-bottom:1px solid rgba(0,0,0,.035);"></div><span class="t" style="font-size:10.8px;line-height:10.8px;top:658.00px;color:#333;transform:scaleX(0.9392);left:74.80px;">2301-0002</span><span class="t" style="font-size:10.8px;line-height:10.8px;top:658.00px;color:#333;transform:scaleX(0.9673);left:169.10px;">WA scoping call</span><span class="t" style="font-size:10.8px;line-height:10.8px;top:658.00px;color:#333;transform:scaleX(0.9598);left:391.00px;">Healthcare - CMD Incident Commander</span><span class="t" style="font-size:10.8px;line-height:10.8px;top:658.00px;color:#333;transform:scaleX(0.9598);left:619.70px;">Healthcare - CMD Incident Commander</span><div class="bdg" style="left:856.90px;top:656.10px;width:84.70px;height:15.20px;background:#ff9800"></div><span class="t" style="font-size:7.8px;line-height:7.8px;top:660.00px;color:#4a2c00;font-weight:700;transform:scaleX(0.9056);left:865.90px;">PRIORITY (12 HRS.)</span><span class="t" style="font-size:10.8px;line-height:10.8px;top:658.00px;color:#333;transform:scaleX(0.9962);left:979.40px;">09/25/2024 09:41:33</span><div class="bdg" style="left:1136.40px;top:656.10px;width:54.20px;height:15.20px;background:#ff9800"></div><span class="t" style="font-size:7.8px;line-height:7.8px;top:660.00px;color:#4a2c00;font-weight:700;transform:scaleX(0.8887);left:1145.40px;">ASSIGNED</span><span class="t" style="font-size:10.8px;line-height:10.8px;top:658.00px;color:#333;transform:scaleX(0.9932);left:1228.10px;">09/25/2023 14:12:06</span><div style="left:1400.00px;top:662.00px;width:3.00px;height:3.00px;background:#444;border-radius:50%"></div><div style="left:1405.00px;top:662.00px;width:3.00px;height:3.00px;background:#444;border-radius:50%"></div><div style="left:1410.00px;top:662.00px;width:3.00px;height:3.00px;background:#444;border-radius:50%"></div><div style="left:71.30px;top:676.20px;width:1347.60px;height:25.80px;background:#ececec;border-bottom:1px solid rgba(0,0,0,.035);"></div><span class="t" style="font-size:10.8px;line-height:10.8px;top:684.00px;color:#333;transform:scaleX(0.9392);left:74.80px;">2211-0001</span><span class="t" style="font-size:10.8px;line-height:10.8px;top:684.00px;color:#333;transform:scaleX(0.9513);left:169.10px;">Public Relations Team Required</span><span class="t" style="font-size:10.8px;line-height:10.8px;top:684.00px;color:#333;transform:scaleX(0.9598);left:391.00px;">Healthcare - CMD Incident Commander</span><span class="t" style="font-size:10.8px;line-height:10.8px;top:684.00px;color:#333;transform:scaleX(0.9598);left:619.70px;">Healthcare - CMD Incident Commander</span><div class="bdg" style="left:856.90px;top:681.90px;width:84.70px;height:15.20px;background:#ff9800"></div><span class="t" style="font-size:7.8px;line-height:7.8px;top:686.00px;color:#4a2c00;font-weight:700;transform:scaleX(0.9056);left:865.90px;">PRIORITY (12 HRS.)</span><span class="t" style="font-size:10.8px;line-height:10.8px;top:684.00px;color:#333;transform:scaleX(0.9962);left:979.40px;">09/25/2024 09:41:33</span><div class="bdg" style="left:1136.40px;top:681.90px;width:68.60px;height:15.20px;background:#00bcd4"></div><span class="t" style="font-size:7.8px;line-height:7.8px;top:686.00px;color:#fff;font-weight:700;transform:scaleX(0.8717);left:1145.40px;">NEW REQUEST</span><span class="t" style="font-size:10.8px;line-height:10.8px;top:684.00px;color:#333;transform:scaleX(0.9932);left:1228.10px;">09/25/2023 14:12:06</span><div style="left:1400.00px;top:688.00px;width:3.00px;height:3.00px;background:#444;border-radius:50%"></div><div style="left:1405.00px;top:688.00px;width:3.00px;height:3.00px;background:#444;border-radius:50%"></div><div style="left:1410.00px;top:688.00px;width:3.00px;height:3.00px;background:#444;border-radius:50%"></div><div style="left:71.30px;top:702.00px;width:1347.60px;height:25.80px;background:#fafafa;border-bottom:1px solid rgba(0,0,0,.035);"></div><span class="t" style="font-size:10.8px;line-height:10.8px;top:710.00px;color:#333;transform:scaleX(0.9392);left:74.80px;">2105-0007</span><span class="t" style="font-size:10.8px;line-height:10.8px;top:710.00px;color:#333;transform:scaleX(0.9519);left:169.10px;">Update the JAS</span><span class="t" style="font-size:10.8px;line-height:10.8px;top:710.00px;color:#333;transform:scaleX(0.9598);left:391.00px;">Healthcare - CMD Incident Commander</span><span class="t" style="font-size:10.8px;line-height:10.8px;top:710.00px;color:#333;transform:scaleX(0.9598);left:619.70px;">Healthcare - CMD Incident Commander</span><div class="bdg" style="left:856.90px;top:707.70px;width:88.00px;height:15.20px;background:#f44336"></div><span class="t" style="font-size:7.8px;line-height:7.8px;top:712.00px;color:#fff;font-weight:700;transform:scaleX(0.9180);left:865.90px;">IMMEDIATE (4 HRS.)</span><span class="t" style="font-size:10.8px;line-height:10.8px;top:710.00px;color:#333;transform:scaleX(0.9962);left:979.40px;">09/25/2024 09:41:33</span><div class="bdg" style="left:1136.40px;top:707.70px;width:54.20px;height:15.20px;background:#ff9800"></div><span class="t" style="font-size:7.8px;line-height:7.8px;top:712.00px;color:#4a2c00;font-weight:700;transform:scaleX(0.8887);left:1145.40px;">ASSIGNED</span><span class="t" style="font-size:10.8px;line-height:10.8px;top:710.00px;color:#333;transform:scaleX(0.9932);left:1228.10px;">09/25/2023 14:12:05</span><div style="left:1400.00px;top:714.00px;width:3.00px;height:3.00px;background:#444;border-radius:50%"></div><div style="left:1405.00px;top:714.00px;width:3.00px;height:3.00px;background:#444;border-radius:50%"></div><div style="left:1410.00px;top:714.00px;width:3.00px;height:3.00px;background:#444;border-radius:50%"></div><div style="left:71.30px;top:727.80px;width:1347.60px;height:25.80px;background:#ececec;border-bottom:1px solid rgba(0,0,0,.035);"></div><span class="t" style="font-size:10.8px;line-height:10.8px;top:736.00px;color:#333;transform:scaleX(0.9392);left:74.80px;">2105-0006</span><span class="t" style="font-size:10.8px;line-height:10.8px;top:736.00px;color:#333;transform:scaleX(0.8654);left:169.10px;">PPE</span><span class="t" style="font-size:10.8px;line-height:10.8px;top:736.00px;color:#333;transform:scaleX(0.9598);left:391.00px;">Healthcare - CMD Incident Commander</span><span class="t" style="font-size:10.8px;line-height:10.8px;top:736.00px;color:#333;transform:scaleX(0.9598);left:619.70px;">Healthcare - CMD Incident Commander</span><div class="bdg" style="left:856.90px;top:733.50px;width:83.00px;height:15.20px;background:#ff9800"></div><span class="t" style="font-size:7.8px;line-height:7.8px;top:738.00px;color:#4a2c00;font-weight:700;transform:scaleX(0.9038);left:865.90px;">ROUTINE (24 HRS.)</span><span class="t" style="font-size:10.8px;line-height:10.8px;top:736.00px;color:#333;transform:scaleX(0.9962);left:979.40px;">09/25/2024 09:41:33</span><div class="bdg" style="left:1136.40px;top:733.50px;width:65.60px;height:15.20px;background:#4caf50"></div><span class="t" style="font-size:7.8px;line-height:7.8px;top:738.00px;color:#fff;font-weight:700;transform:scaleX(0.8789);left:1145.40px;">IN PROGRESS</span><span class="t" style="font-size:10.8px;line-height:10.8px;top:736.00px;color:#333;transform:scaleX(0.9932);left:1228.10px;">09/25/2023 14:12:05</span><div style="left:1400.00px;top:739.00px;width:3.00px;height:3.00px;background:#444;border-radius:50%"></div><div style="left:1405.00px;top:739.00px;width:3.00px;height:3.00px;background:#444;border-radius:50%"></div><div style="left:1410.00px;top:739.00px;width:3.00px;height:3.00px;background:#444;border-radius:50%"></div><div style="left:71.30px;top:753.60px;width:1347.60px;height:25.80px;background:#fafafa;border-bottom:1px solid rgba(0,0,0,.035);"></div><span class="t" style="font-size:10.8px;line-height:10.8px;top:761.00px;color:#333;transform:scaleX(0.9392);left:74.80px;">2105-0004</span><span class="t" style="font-size:10.8px;line-height:10.8px;top:761.00px;color:#333;transform:scaleX(0.9631);left:169.10px;">Firefighting Crew</span><span class="t" style="font-size:10.8px;line-height:10.8px;top:761.00px;color:#333;transform:scaleX(0.9598);left:391.00px;">Healthcare - CMD Incident Commander</span><span class="t" style="font-size:10.8px;line-height:10.8px;top:761.00px;color:#333;transform:scaleX(0.9598);left:619.70px;">Healthcare - CMD Incident Commander</span><div class="bdg" style="left:856.90px;top:759.30px;width:88.00px;height:15.20px;background:#f44336"></div><span class="t" style="font-size:7.8px;line-height:7.8px;top:763.00px;color:#fff;font-weight:700;transform:scaleX(0.9180);left:865.90px;">IMMEDIATE (4 HRS.)</span><span class="t" style="font-size:10.8px;line-height:10.8px;top:761.00px;color:#333;transform:scaleX(0.9962);left:979.40px;">09/25/2024 09:41:33</span><div class="bdg" style="left:1136.40px;top:759.30px;width:54.20px;height:15.20px;background:#ff9800"></div><span class="t" style="font-size:7.8px;line-height:7.8px;top:763.00px;color:#4a2c00;font-weight:700;transform:scaleX(0.8887);left:1145.40px;">ASSIGNED</span><span class="t" style="font-size:10.8px;line-height:10.8px;top:761.00px;color:#333;transform:scaleX(0.9932);left:1228.10px;">09/25/2023 14:12:05</span><div style="left:1400.00px;top:765.00px;width:3.00px;height:3.00px;background:#444;border-radius:50%"></div><div style="left:1405.00px;top:765.00px;width:3.00px;height:3.00px;background:#444;border-radius:50%"></div><div style="left:1410.00px;top:765.00px;width:3.00px;height:3.00px;background:#444;border-radius:50%"></div><div style="left:71.30px;top:779.40px;width:1347.60px;height:6.00px;background:#ececec"></div></main>
<div style="left:56.00px;top:49.50px;width:1388.00px;height:36.40px;background:#fff;border-bottom:1px solid #b4b4b4;box-shadow:0 1px 2px rgba(0,0,0,.12);z-index:2"></div><div style="left:0;top:0;width:1446px;height:86px;z-index:3"><div style="left:86.20px;top:56.00px;width:147.00px;height:22.80px;background:#cfe2f6;border-radius:3px"></div><svg class="i" style="left:92.00px;top:59.00px" width="18.00" height="17.00" viewBox="92 59 18 17" ><g fill="none" stroke="#0a62cc" stroke-width="1.5"><rect x="94.9" y="61.2" width="12.4" height="12.2" rx="1.4"/><path d="M100.4 61.2V73.4M100.4 66.6H107.3"/></g></svg><span class="t" style="font-size:10.2px;line-height:10.2px;top:63.00px;color:#0a62cc;transform:scaleX(0.9644);-webkit-text-stroke:0.3px #0a62cc;left:116.70px;">REQUESTS TASKS</span><svg class="i" style="left:212.30px;top:59.80px" width="15.00" height="15.00" viewBox="0 0 24 24" ><path fill="#0a62cc" d="M12 2C6.47 2 2 6.47 2 12s4.47 10 10 10 10-4.47 10-10S17.53 2 12 2zm0 18c-4.41 0-8-3.59-8-8s3.59-8 8-8 8 3.59 8 8-3.59 8-8 8zm3.59-13L12 10.59 8.41 7 7 8.41 10.59 12 7 15.59 8.41 17 12 13.41 15.59 17 17 15.59 13.41 12 17 8.41z"/></svg><div style="left:236.00px;top:58.80px;width:1.00px;height:17.00px;background:#e4e4e4"></div><div style="left:1404.40px;top:58.40px;width:1.00px;height:18.00px;background:#e2e2e2"></div><svg class="i" style="left:1416.95px;top:58.65px" width="17.90" height="17.90" viewBox="0 0 24 24" ><path fill="#0a62cc" d="M7 9H2V7h5v2zm0 3H2v2h5v-2zm13.59 7l-3.83-3.83c-.8.52-1.74.83-2.76.83-2.76 0-5-2.24-5-5s2.24-5 5-5 5 2.24 5 5c0 1.02-.31 1.96-.83 2.75L22 17.59 20.59 19zM17 11c0-1.65-1.35-3-3-3s-3 1.35-3 3 1.35 3 3 3 3-1.35 3-3zM2 19h10v-2H2v2z"/></svg></div><div style="left:56.00px;top:85.50px;width:1388.00px;height:80.50px;background:#fff;box-shadow:0 2px 5px rgba(0,0,0,.13);z-index:1"></div><nav style="left:0;top:0;width:1446px;height:166px;z-index:2"><span class="t" style="font-size:12.3px;line-height:12.3px;top:94.00px;color:#1b5a80;transform:scaleX(0.8977);-webkit-text-stroke:0.3px #1b5a80;left:80.30px;">REQUESTS/TASKS</span><span class="t" style="font-size:12.3px;line-height:12.3px;top:94.00px;color:#1b5a80;transform:scaleX(0.8963);-webkit-text-stroke:0.3px #1b5a80;left:205.00px;">DEPLOYMENTS</span><span class="t" style="font-size:12.3px;line-height:12.3px;top:94.00px;color:#1b5a80;transform:scaleX(0.9077);-webkit-text-stroke:0.3px #1b5a80;left:312.90px;">FINANCE</span><span class="t" style="font-size:12.3px;line-height:12.3px;top:94.00px;color:#1b5a80;transform:scaleX(0.8959);-webkit-text-stroke:0.3px #1b5a80;left:386.80px;">DASHBOARD</span><div style="left:68.30px;top:114.70px;width:124.10px;height:1.45px;background:#1b5a80"></div><svg class="i" style="left:78.00px;top:128.00px" width="20.00" height="26.00" viewBox="78 128 20 26" ><path fill="#c9192c" d="M81.1 135.1H86.1V147.9C83.2 146.8 81.1 144.6 81.1 141.5Z"/><path fill="#c9192c" d="M86 130.1H95.8V141.5C95.8 147.5 92 151.2 86 152.8V147.6C89 146.8 90.9 144.9 90.9 141.9V135.3H86Z"/></svg><span class="t" style="font-size:4.5px;line-height:4.5px;top:155.00px;color:#3a3a3a;font-weight:700;transform:scaleX(0.8564);left:80.20px;">WebEOC</span><span class="t" style="font-size:16.4px;line-height:16.4px;top:128.00px;color:#111;font-weight:700;transform:scaleX(0.8997);left:121.70px;">Requests/Tasks</span><span class="t" style="font-size:9.1px;line-height:9.1px;top:151.00px;color:#111;font-weight:700;transform:scaleX(0.9562);left:121.70px;">DAILY OPERATIONS</span><div style="left:1154.50px;top:131.20px;width:114.00px;height:25.70px;background:#1a5a80;border-radius:3px;box-shadow:0 1px 2px rgba(0,0,0,.25)"></div><span class="t" style="font-size:11.5px;line-height:11.5px;top:139.00px;color:#fff;transform:scaleX(0.8426);-webkit-text-stroke:0.25px #fff;left:1169.40px;">CREATE NEW</span><svg class="i" style="left:1240.10px;top:137.30px" width="14.00" height="14.00" viewBox="0 0 24 24" ><path fill="#fff" d="M19 13h-6v6h-2v-6H5v-2h6V5h2v6h6v2z"/></svg><div style="left:1275.40px;top:130.20px;width:131.50px;height:27.50px;background:#fff;border:1px solid #3a7499;border-radius:3px"></div><span class="t" style="font-size:11.5px;line-height:11.5px;top:139.00px;color:#1b5a80;transform:scaleX(0.8562);-webkit-text-stroke:0.2px #1b5a80;left:1291.40px;">FILTER/SEARCH</span><svg class="i" style="left:1378.30px;top:137.80px" width="13.40" height="13.40" viewBox="0 0 24 24" ><path fill="#1b5a80" d="M10 18h4v-2h-4v2zM3 6v2h18V6H3zm3 7h12v-2H6v2z"/></svg><div style="left:1417.00px;top:142.20px;width:2.90px;height:2.90px;background:#444;border-radius:50%"></div><div style="left:1421.70px;top:142.20px;width:2.90px;height:2.90px;background:#444;border-radius:50%"></div><div style="left:1426.40px;top:142.20px;width:2.90px;height:2.90px;background:#444;border-radius:50%"></div></nav>
<div style="left:1432.40px;top:166.00px;width:11.60px;height:616.60px;background:#f3f3f3;z-index:2"></div><div style="left:1432.70px;top:179.00px;width:10.20px;height:358.40px;background:#c1c1c1;z-index:2"></div><svg class="i" style="z-index:3;left:1435.00px;top:171.40px" width="5.40" height="3.20" viewBox="0 0 5.4 3.2" ><path d="M0 3.2H5.4L2.7 0Z" fill="#8a8a8a"/></svg><svg class="i" style="z-index:3;left:1435.00px;top:774.20px" width="5.40" height="3.20" viewBox="0 0 5.4 3.2" ><path d="M0 0H5.4L2.7 3.2Z" fill="#555"/></svg>
<footer style="left:56.00px;top:782.60px;width:1388.00px;height:30.40px;background:#fff;border-top:1px solid #dedede;z-index:2"></footer><div style="left:0;top:0;width:1446px;height:815px;z-index:3"><svg class="i" style="left:75.00px;top:794.00px" width="8.00" height="10.80" viewBox="0 0 8 10.8" ><path d="M0 0H1.9V10.8H0ZM7.8 0V10.8L1.9 5.4Z" fill="#4c9cd4"/></svg><svg class="i" style="left:103.90px;top:794.00px" width="9.70" height="10.80" viewBox="0 0 9.7 10.8" ><path d="M9.7 0V10.8L0 5.4Z" fill="#4c9cd4"/></svg><span class="t" style="font-size:10.8px;line-height:10.8px;top:793.00px;color:#787878;transform:scaleX(0.9270);left:130.30px;">Page 1 of 3</span><svg class="i" style="left:198.90px;top:794.00px" width="9.70" height="10.80" viewBox="0 0 9.7 10.8" ><path d="M0 0V10.8L9.7 5.4Z" fill="#1279c6"/></svg><svg class="i" style="left:229.00px;top:794.00px" width="8.10" height="10.80" viewBox="0 0 8.1 10.8" ><path d="M0 0V10.8L6 5.4ZM6.1 0H8.1V10.8H6.1Z" fill="#1279c6"/></svg><div style="left:258.10px;top:795.00px;width:8.90px;height:8.90px;border:1px solid #858585;border-radius:2px;background:#fff"></div><span class="t" style="font-size:10.8px;line-height:10.8px;top:793.00px;color:#787878;transform:scaleX(0.9055);left:273.50px;">Disable Refresh?</span><span class="t" style="font-size:10.6px;line-height:10.6px;top:794.00px;color:#777;transform:scaleX(0.9583);left:1263.90px;">©2024 ESi Acquisition, Inc. WebEOC</span></div>
<aside style="left:2.00px;top:49.50px;width:54.00px;height:763.50px;background:#fff;box-shadow:1px 0 3px rgba(0,0,0,.18);z-index:3"></aside><div style="left:0;top:0;width:60px;height:815px;z-index:4"><svg class="i" style="left:20.60px;top:67.80px" width="16.80" height="16.80" viewBox="0 0 24 24" ><path fill="#444" d="M12 5.69l5 4.5V18h-2v-6H9v6H7v-7.81l5-4.5M12 3L2 12h3v8h6v-6h2v6h6v-8h3L12 3z"/></svg><svg class="i" style="left:20.00px;top:110.00px" width="20.00" height="18.00" viewBox="20 110 20 18" ><g fill="none" stroke="#505050" stroke-width="1.5"><rect x="22.95" y="113.25" width="12.1" height="11.9" rx="1.6"/><path d="M28.9 113.3V125.1M28.9 118.5H35"/></g></svg><div class="dot" style="left:35.10px;top:106.80px;width:6.00px;height:6.00px;"></div><svg class="i" style="left:20.90px;top:152.90px" width="16.20" height="16.20" viewBox="0 0 24 24" ><path fill="#444" d="M20.5 3l-.16.03L15 5.1 9 3 3.36 4.9c-.21.07-.36.25-.36.48V20.5c0 .28.22.5.5.5l.16-.03L9 18.9l6 2.1 5.64-1.9c.21-.07.36-.25.36-.48V3.5c0-.28-.22-.5-.5-.5zM10 5.47l4 1.4v11.66l-4-1.4V5.47zm-5 .99l3-1.01v11.7l-3 1.16V6.46zm14 11.08l-3 1.01V6.86l3-1.16v11.84z"/></svg><svg class="i" style="left:20.00px;top:194.00px" width="20.00" height="18.00" viewBox="20 194 20 18" ><g fill="none" stroke="#505050" stroke-width="1.4"><rect x="22.4" y="197.2" width="13.3" height="9.6" rx="1.4"/></g><rect x="26" y="207.6" width="6" height="1.9" fill="#505050"/><g stroke="#505050" stroke-width="0.9" fill="none"><path d="M25 200.4H32.6M31.2 199.2L32.6 200.4L31.2 201.6M33 203.6H25.4M26.8 202.4L25.4 203.6L26.8 204.8"/></g></svg><div class="dot" style="left:35.10px;top:190.80px;width:6.00px;height:6.00px;"></div><svg class="i" style="left:20.50px;top:237.40px" width="16.60" height="16.60" viewBox="0 0 24 24" ><path fill="#444" d="M10.5 4.5c.28 0 .5.22.5.5v2h6v6h2c.28 0 .5.22.5.5s-.22.5-.5.5h-2v6h-2.12c-.68-1.75-2.39-3-4.38-3s-3.7 1.25-4.38 3H4v-2.12c1.75-.68 3-2.39 3-4.38 0-1.99-1.24-3.7-2.99-4.38L4 7h6V5c0-.28.22-.5.5-.5m0-2C9.12 2.5 8 3.62 8 5H4c-1.1 0-1.99.9-1.99 2v3.8h.29c1.49 0 2.7 1.21 2.7 2.7s-1.21 2.7-2.7 2.7H2V20c0 1.1.9 2 2 2h3.8v-.3c0-1.49 1.21-2.7 2.7-2.7s2.7 1.21 2.7 2.7v.3H17c1.1 0 2-.9 2-2v-4c1.38 0 2.5-1.12 2.5-2.5S20.38 11 19 11V7c0-1.1-.9-2-2-2h-4c0-1.38-1.12-2.5-2.5-2.5z"/></svg><svg class="i" style="left:21.00px;top:278.90px" width="16.60" height="16.60" viewBox="0 0 24 24" ><path fill="#444" d="M18 11v2h4v-2h-4zm-2 6.61c.96.71 2.21 1.65 3.2 2.39.4-.53.8-1.07 1.2-1.6-.99-.74-2.24-1.68-3.2-2.4-.4.54-.8 1.08-1.2 1.61zM20.4 5.6c-.4-.53-.8-1.07-1.2-1.6-.99.74-2.24 1.68-3.2 2.4.4.53.8 1.07 1.2 1.6.96-.72 2.21-1.65 3.2-2.4zM4 9c-1.1 0-2 .9-2 2v2c0 1.1.9 2 2 2h1v4h2v-4h1l5 3V6L8 9H4zm5.03 1.71L11 9.53v4.94l-1.97-1.18-.48-.29H4v-2h4.55l.48-.29zM15.5 12c0-1.33-.58-2.53-1.5-3.35v6.69c.92-.81 1.5-2.01 1.5-3.34z"/></svg><svg class="i" style="left:21.30px;top:320.30px" width="15.80" height="15.80" viewBox="0 0 24 24" ><path fill="#444" d="M20.84 4.22c-.05-.12-.11-.23-.18-.34-.14-.21-.33-.4-.54-.54-.11-.07-.22-.13-.34-.18-.24-.1-.5-.16-.78-.16h-1V1h-2v2H8V1H6v2H5c-.42 0-.8.13-1.12.34-.21.14-.4.33-.54.54-.07.11-.13.22-.18.34-.1.24-.16.5-.16.78v14c0 1.1.89 2 2 2h14c.28 0 .54-.06.78-.16.12-.05.23-.11.34-.18.21-.14.4-.33.54-.54.21-.32.34-.71.34-1.12V5c0-.28-.06-.54-.16-.78zM5 19V5h14v14H5zm7-6.12c-2.03 0-6 1.08-6 3.58V18h12v-1.53c0-2.51-3.97-3.59-6-3.59zM8.31 16c.69-.56 2.38-1.12 3.69-1.12s3.01.56 3.69 1.12H8.31zM12 12c1.65 0 3-1.35 3-3s-1.35-3-3-3-3 1.35-3 3 1.35 3 3 3zm0-4c.55 0 1 .45 1 1s-.45 1-1 1-1-.45-1-1 .45-1 1-1z"/></svg><div style="left:2.00px;top:685.30px;width:54.00px;height:1.00px;background:#e6e6e6"></div><div style="left:2.00px;top:770.30px;width:54.00px;height:1.00px;background:#e6e6e6"></div><svg class="i" style="left:18.00px;top:697.00px" width="22.00" height="21.00" viewBox="18 697 22 21" ><g fill="none" stroke="#4a5a78" stroke-width="1.1"><circle cx="28.8" cy="707.4" r="5.6"/><ellipse cx="28.8" cy="707.4" rx="2.3" ry="5.6"/><path d="M23.4 705.6H34.2M23.4 709.3H34.2"/></g><circle cx="28.8" cy="707.4" r="7.6" fill="none" stroke="#d8102f" stroke-width="1" stroke-dasharray="9.5 6.4" stroke-dashoffset="3"/><g fill="#d8102f"><circle cx="34.6" cy="702.4" r="1.5"/><circle cx="21.6" cy="708.6" r="1.5"/><circle cx="32.8" cy="714" r="1.5"/></g></svg><svg class="i" style="left:20.00px;top:741.00px" width="18.00" height="17.00" viewBox="20 741 18 17" ><rect x="21.3" y="742.8" width="7.6" height="13.5" fill="#56607a"/><g fill="#fff"><rect x="22.6" y="744.4" width="1.5" height="1.6"/><rect x="22.6" y="747.3" width="1.5" height="1.6"/><rect x="22.6" y="750.2" width="1.5" height="1.6"/><rect x="22.6" y="753.1" width="1.5" height="1.6"/><rect x="25.8" y="744.4" width="1.5" height="1.6"/><rect x="25.8" y="747.3" width="1.5" height="1.6"/><rect x="25.8" y="750.2" width="1.5" height="1.6"/><rect x="25.8" y="753.1" width="1.5" height="1.6"/></g><path d="M32.2 744.6H36.9V756.3H34.6V746.9H32.2Z" fill="#56607a"/><rect x="30.4" y="748.6" width="3.6" height="7.7" fill="#d8102f"/></svg><svg class="i" style="left:22.00px;top:786.00px" width="14.00" height="12.00" viewBox="22 786 14 12" ><g fill="none" stroke="#3c3c3c" stroke-width="1.5"><path d="M24.2 788.2L28 792.1L24.2 796M29.6 788.2L33.4 792.1L29.6 796"/></g></svg></div>
<header style="left:2.00px;top:2.00px;width:1442.00px;height:47.50px;background:#212121;box-shadow:0 1px 4px rgba(0,0,0,.45);z-index:5"></header><div style="left:0;top:0;width:1446px;height:50px;z-index:6"><svg class="i" style="left:0.00px;top:0.00px" width="60.00" height="50.00" viewBox="0 0 60 50" ><g stroke="#c6c6c6" stroke-width="1.35" fill="none" stroke-linecap="butt"><path d="M20.8 21.6H31M20.8 25.85H28.6M20.8 30.1H31"/><path d="M34.4 22.7L31.1 25.85L34.4 29" stroke-width="1.4"/></g></svg><div class="dot" style="left:33.60px;top:13.90px;width:6.50px;height:6.50px;"></div><div style="left:56.00px;top:14.20px;width:1.20px;height:23.70px;background:#4d4d4d"></div><svg class="i" style="left:0.00px;top:0.00px" width="100.00" height="50.00" viewBox="0 0 100 50" ><path fill="#d8102f" d="M73.8 19.9H78.7V32.3C75.9 31.2 73.8 29.1 73.8 26.4Z"/><path fill="#d8102f" d="M78.4 14.9H88V26.4C88 32 84.2 35.7 78.4 37.2V31.9C81.2 31.1 82.9 29.4 82.9 26.8V20.2H78.4Z"/></svg><span class="t" style="font-size:14.9px;line-height:14.9px;top:19.00px;color:#fff;transform:scaleX(0.9222);-webkit-text-stroke:0.55px #fff;left:105.30px;">WebEOC</span><svg class="i" style="left:1027.30px;top:16.60px" width="18.60" height="18.60" viewBox="0 0 24 24" ><path fill="#c2c2c2" d="M11 18h2v-2h-2v2zm1-16C6.48 2 2 6.48 2 12s4.48 10 10 10 10-4.48 10-10S17.52 2 12 2zm0 18c-4.41 0-8-3.59-8-8s3.59-8 8-8 8 3.59 8 8-3.59 8-8 8zm0-14c-2.21 0-4 1.79-4 4h2c0-1.1.9-2 2-2s2 .9 2 2c0 2-3 1.75-3 5h2c0-2.25 3-2.5 3-5 0-2.21-1.79-4-4-4z"/></svg><svg class="i" style="left:1060.00px;top:14.00px" width="26.00" height="24.00" viewBox="1060 14 26 24" ><g fill="none" stroke="#c2c2c2" stroke-width="1.35" stroke-linejoin="miter"><path d="M1066 26.3L1072.3 20.5L1078.6 26.3"/><path d="M1068.1 24.9V31.6H1072.4V27.5H1073.6"/></g><g fill="#c2c2c2"><circle cx="1077.4" cy="30.1" r="2.95"/><rect x="1076.35" y="26.15" width="2.1" height="7.9" rx=".4" transform="rotate(0 1077.4 30.1)"/><rect x="1076.35" y="26.15" width="2.1" height="7.9" rx=".4" transform="rotate(60 1077.4 30.1)"/><rect x="1076.35" y="26.15" width="2.1" height="7.9" rx=".4" transform="rotate(120 1077.4 30.1)"/></g><circle cx="1077.4" cy="30.1" r="1.35" fill="#212121"/></svg><svg class="i" style="left:1099.65px;top:17.15px" width="18.30" height="18.30" viewBox="0 0 24 24" ><path fill="#c2c2c2" d="M12 22c1.1 0 2-.9 2-2h-4c0 1.1.9 2 2 2zm6-6v-5c0-3.07-1.63-5.64-4.5-6.32V4c0-.83-.67-1.5-1.5-1.5s-1.5.67-1.5 1.5v.68C7.64 5.36 6 7.92 6 11v5l-2 2v1h16v-1l-2-2zm-2 1H8v-6c0-2.48 1.51-4.5 4-4.5s4 2.02 4 4.5v6z"/></svg><div style="left:1107.40px;top:9.30px;width:20.50px;height:15.50px;background:#e01638;border-radius:8px;box-shadow:0 0 0 1px #212121"></div><span class="t" style="font-size:9px;line-height:9px;top:13.00px;color:#fff;font-weight:700;transform:scaleX(0.9585);left:1113.00px;">15</span><svg class="i" style="left:1135.65px;top:16.95px" width="18.30" height="18.30" viewBox="0 0 24 24" ><path fill="#c2c2c2" d="M19.43 12.98c.04-.32.07-.64.07-.98 0-.34-.03-.66-.07-.98l2.11-1.65c.19-.15.24-.42.12-.64l-2-3.46c-.09-.16-.26-.25-.44-.25-.06 0-.12.01-.17.03l-2.49 1c-.52-.4-1.08-.73-1.69-.98l-.38-2.65C14.46 2.18 14.25 2 14 2h-4c-.25 0-.46.18-.49.42l-.38 2.65c-.61.25-1.17.59-1.69.98l-2.49-1c-.06-.02-.12-.03-.18-.03-.17 0-.34.09-.43.25l-2 3.46c-.13.22-.07.49.12.64l2.11 1.65c-.04.32-.07.65-.07.98 0 .33.03.66.07.98l-2.11 1.65c-.19.15-.24.42-.12.64l2 3.46c.09.16.26.25.44.25.06 0 .12-.01.17-.03l2.49-1c.52.4 1.08.73 1.69.98l.38 2.65c.03.24.24.42.49.42h4c.25 0 .46-.18.49-.42l.38-2.65c.61-.25 1.17-.59 1.69-.98l2.49 1c.06.02.12.03.18.03.17 0 .34-.09.43-.25l2-3.46c.12-.22.07-.49-.12-.64l-2.11-1.65zm-1.98-1.71c.04.31.05.52.05.73 0 .21-.02.43-.05.73l-.14 1.13.89.7 1.08.84-.7 1.21-1.27-.51-1.04-.42-.9.68c-.43.32-.84.56-1.25.73l-1.06.43-.16 1.13-.2 1.35h-1.4l-.19-1.35-.16-1.13-1.06-.43c-.43-.18-.83-.41-1.23-.71l-.91-.7-1.06.43-1.27.51-.7-1.21 1.08-.84.89-.7-.14-1.13c-.03-.31-.05-.54-.05-.74s.02-.43.05-.73l.14-1.13-.89-.7-1.08-.84.7-1.21 1.27.51 1.04.42.9-.68c.43-.32.84-.56 1.25-.73l1.06-.43.16-1.13.2-1.35h1.39l.19 1.35.16 1.13 1.06.43c.43.18.83.41 1.23.71l.91.7 1.06-.43 1.27-.51.7 1.21-1.07.85-.89.7.14 1.13zM12 8c-2.21 0-4 1.79-4 4s1.79 4 4 4 4-1.79 4-4-1.79-4-4-4zm0 6c-1.1 0-2-.9-2-2s.9-2 2-2 2 .9 2 2-.9 2-2 2z"/></svg><div style="left:1168.20px;top:14.20px;width:1.50px;height:23.40px;background:#4a4a4a"></div><div style="left:1184.20px;top:10.80px;width:30.50px;height:30.20px;background:#4caf50;border-radius:50%"></div><span class="t" style="font-size:14px;line-height:14px;top:19.00px;color:#fff;transform:scaleX(1.0205);left:1186.80px;">MW</span><span class="t" style="font-size:10px;line-height:10px;top:14.00px;color:#fff;font-weight:700;transform:scaleX(0.9921);left:1226.60px;">Healthcare - CMD Incident Comma…</span><span class="t" style="font-size:10.4px;line-height:10.4px;top:30.00px;color:#e4e4e4;transform:scaleX(1.0024);left:1226.60px;">Daily Operations</span><svg class="i" style="left:1418.90px;top:24.20px" width="8.00" height="4.20" viewBox="0 0 8 4.2" ><path d="M0 0H8L4 4.2Z" fill="#777"/></svg></div>
</div></body></html>
